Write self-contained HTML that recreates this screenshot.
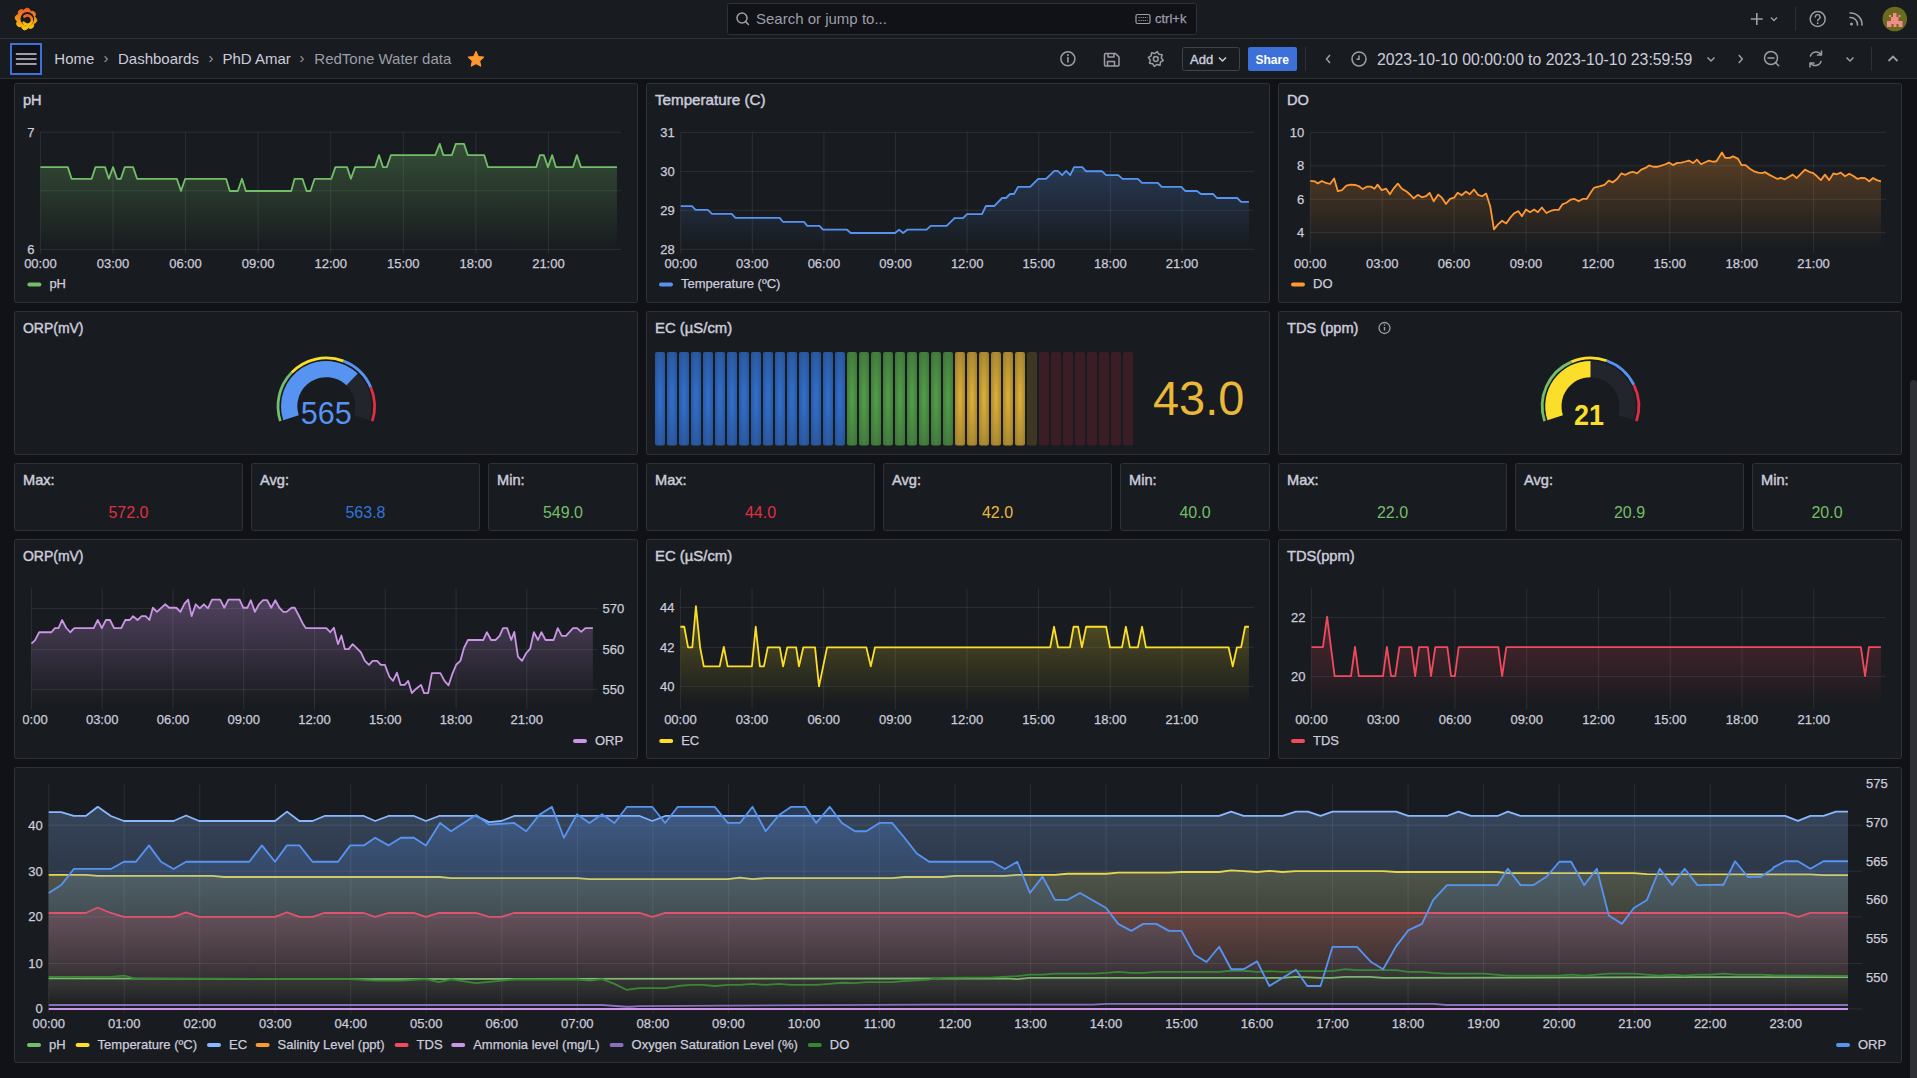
<!DOCTYPE html>
<html><head><meta charset="utf-8"><title>RedTone Water data - Dashboards - Grafana</title>
<style>html,body{margin:0;padding:0;background:#111217;width:1917px;height:1078px;overflow:hidden;font-family:"Liberation Sans",sans-serif}svg{display:block}</style>
</head><body><svg width="1917" height="1078" viewBox="0 0 1917 1078" font-family="'Liberation Sans', sans-serif"><defs><linearGradient id="lg" x1="0" y1="0" x2="0" y2="1"><stop offset="0" stop-color="#f05a28"/><stop offset="1" stop-color="#fbca0a"/></linearGradient><linearGradient id="g1" gradientUnits="userSpaceOnUse" x1="0" y1="132.2" x2="0" y2="249.4"><stop offset="0" stop-color="#73bf69" stop-opacity="0.35"/><stop offset="1" stop-color="#73bf69" stop-opacity="0"/></linearGradient><linearGradient id="g2" gradientUnits="userSpaceOnUse" x1="0" y1="132.4" x2="0" y2="249.3"><stop offset="0" stop-color="#5794f2" stop-opacity="0.35"/><stop offset="1" stop-color="#5794f2" stop-opacity="0"/></linearGradient><linearGradient id="g3" gradientUnits="userSpaceOnUse" x1="0" y1="132.4" x2="0" y2="249.4"><stop offset="0" stop-color="#ff9830" stop-opacity="0.35"/><stop offset="1" stop-color="#ff9830" stop-opacity="0"/></linearGradient><linearGradient id="g4" gradientUnits="userSpaceOnUse" x1="0" y1="588.6" x2="0" y2="705.4"><stop offset="0" stop-color="#ca95e5" stop-opacity="0.35"/><stop offset="1" stop-color="#ca95e5" stop-opacity="0"/></linearGradient><clipPath id="c5"><rect x="22.7" y="0" width="2000" height="2000"/></clipPath><linearGradient id="g6" gradientUnits="userSpaceOnUse" x1="0" y1="588.4" x2="0" y2="705"><stop offset="0" stop-color="#fade2a" stop-opacity="0.35"/><stop offset="1" stop-color="#fade2a" stop-opacity="0"/></linearGradient><linearGradient id="g7" gradientUnits="userSpaceOnUse" x1="0" y1="588.4" x2="0" y2="705"><stop offset="0" stop-color="#f2495c" stop-opacity="0.35"/><stop offset="1" stop-color="#f2495c" stop-opacity="0"/></linearGradient><linearGradient id="g8" gradientUnits="userSpaceOnUse" x1="0" y1="784.4" x2="0" y2="1009"><stop offset="0" stop-color="#73bf69" stop-opacity="0.3"/><stop offset="1" stop-color="#73bf69" stop-opacity="0"/></linearGradient><linearGradient id="g9" gradientUnits="userSpaceOnUse" x1="0" y1="784.4" x2="0" y2="1009"><stop offset="0" stop-color="#fade2a" stop-opacity="0.3"/><stop offset="1" stop-color="#fade2a" stop-opacity="0"/></linearGradient><linearGradient id="g10" gradientUnits="userSpaceOnUse" x1="0" y1="784.4" x2="0" y2="1009"><stop offset="0" stop-color="#8ab8ff" stop-opacity="0.3"/><stop offset="1" stop-color="#8ab8ff" stop-opacity="0"/></linearGradient><linearGradient id="g11" gradientUnits="userSpaceOnUse" x1="0" y1="784.4" x2="0" y2="1009"><stop offset="0" stop-color="#f2495c" stop-opacity="0.5"/><stop offset="1" stop-color="#f2495c" stop-opacity="0"/></linearGradient><linearGradient id="g12" gradientUnits="userSpaceOnUse" x1="0" y1="784.4" x2="0" y2="1009"><stop offset="0" stop-color="#ca95e5" stop-opacity="0.3"/><stop offset="1" stop-color="#ca95e5" stop-opacity="0"/></linearGradient><linearGradient id="g13" gradientUnits="userSpaceOnUse" x1="0" y1="784.4" x2="0" y2="1009"><stop offset="0" stop-color="#8a6fc0" stop-opacity="0.3"/><stop offset="1" stop-color="#8a6fc0" stop-opacity="0"/></linearGradient><linearGradient id="g14" gradientUnits="userSpaceOnUse" x1="0" y1="784.4" x2="0" y2="1009"><stop offset="0" stop-color="#37872d" stop-opacity="0.3"/><stop offset="1" stop-color="#37872d" stop-opacity="0"/></linearGradient><linearGradient id="g15" gradientUnits="userSpaceOnUse" x1="0" y1="784.4" x2="0" y2="1009"><stop offset="0" stop-color="#5794f2" stop-opacity="0.3"/><stop offset="1" stop-color="#5794f2" stop-opacity="0"/></linearGradient><radialGradient id="rgb" cx="0.5" cy="0.5" r="0.7071"><stop offset="0.1" stop-color="#3274d9" stop-opacity="0.92"/><stop offset="1" stop-color="#3274d9" stop-opacity="0.6"/></radialGradient><radialGradient id="rgg" cx="0.5" cy="0.5" r="0.7071"><stop offset="0.1" stop-color="#56a64b" stop-opacity="0.92"/><stop offset="1" stop-color="#56a64b" stop-opacity="0.6"/></radialGradient><radialGradient id="rgy" cx="0.5" cy="0.5" r="0.7071"><stop offset="0.1" stop-color="#eab839" stop-opacity="0.92"/><stop offset="1" stop-color="#eab839" stop-opacity="0.6"/></radialGradient><radialGradient id="rgr" cx="0.5" cy="0.5" r="0.7071"><stop offset="0.1" stop-color="#e02f44" stop-opacity="0.92"/><stop offset="1" stop-color="#e02f44" stop-opacity="0.6"/></radialGradient></defs><rect x="0" y="0" width="1917" height="1078" fill="#111217"/><rect x="0" y="0" width="1917" height="38" fill="#181b1f"/><rect x="0" y="38" width="1917" height="1" fill="#2e3136"/><rect x="0" y="39" width="1917" height="39" fill="#181b1f"/><rect x="0" y="78" width="1917" height="1" fill="#2e3136"/><path d="M27.64,8.12 L29.53,9.22 L30.6,11.38 L33.01,11.31 L34.85,12.47 L35.41,14.58 L34.64,16.86 L36.39,18.52 L36.88,20.64 L35.78,22.53 L33.62,23.6 L33.69,26.01 L32.53,27.85 L30.42,28.41 L28.14,27.64 L26.48,29.39 L24.36,29.88 L22.47,28.78 L21.4,26.62 L18.99,26.69 L17.15,25.53 L16.59,23.42 L17.36,21.14 L15.61,19.48 L15.12,17.36 L16.22,15.47 L18.38,14.4 L18.31,11.99 L19.47,10.15 L21.58,9.59 L23.86,10.36 L25.52,8.61 Z" fill="url(#lg)" stroke="url(#lg)" stroke-width="1" stroke-linejoin="round"/><circle cx="27.3" cy="18.8" r="6.9" fill="#181b1f"/><path d="M24.4,16.5 A4.6,4.6 0 1 1 23.6,22.6" fill="none" stroke="url(#lg)" stroke-width="2.6" stroke-linecap="round"/><circle cx="27.6" cy="20.2" r="1.7" fill="#181b1f"/><rect x="727.5" y="3.5" width="469" height="31" rx="2" fill="#111217" stroke="#2e3136"/><circle cx="742" cy="18" r="5" fill="none" stroke="#9d9da8" stroke-width="1.5"/><line x1="745.6" y1="21.6" x2="748.5" y2="24.5" stroke="#9d9da8" stroke-width="1.5" stroke-linecap="round"/><text x="756" y="24" font-size="15" fill="#9d9da8" text-anchor="start" >Search or jump to...</text><rect x="1136" y="14.5" width="14" height="9" rx="1.5" fill="none" stroke="#9d9da8" stroke-width="1.2"/><path d="M1138.5,17.5 h9 M1138.5,20.5 h9" stroke="#9d9da8" stroke-width="1" stroke-dasharray="1.2 0.9"/><text x="1155" y="22.5" font-size="13" fill="#9d9da8" text-anchor="start"  stroke="#9d9da8" stroke-width="0.25">ctrl+k</text><path d="M1756.8,13 v12 M1750.8,19 h12" stroke="#9d9da8" stroke-width="1.6"/><path d="M1771,17.5 l3,3 l3,-3" fill="none" stroke="#9d9da8" stroke-width="1.3"/><rect x="1795" y="7" width="1" height="24" fill="#2e3136"/><circle cx="1817.7" cy="19" r="7.5" fill="none" stroke="#9d9da8" stroke-width="1.5"/><path d="M1815.3,17 a2.4,2.4 0 1 1 3.2,2.3 q-0.8,0.4 -0.8,1.4" fill="none" stroke="#9d9da8" stroke-width="1.4" stroke-linecap="round"/><circle cx="1817.7" cy="23.2" r="0.9" fill="#9d9da8"/><circle cx="1851.5" cy="24" r="1.5" fill="#9d9da8"/><path d="M1850,17.5 a7,7 0 0 1 7.5,7.5 M1850,13 a11.5,11.5 0 0 1 12,12" fill="none" stroke="#9d9da8" stroke-width="1.6" stroke-linecap="round"/><circle cx="1894.8" cy="19" r="12.3" fill="#6b6b1f"/><path d="M1887,21 h15.5 v6 h-4 v-3 h-2 v3 h-3 v-3 h-2 v3 h-4.5 z M1891,17 h7.5 v4 h-7.5 z M1893,13 h3.5 v4 h-3.5 z M1889,15 h2 v2 h-2z M1898.5,15 h2 v2 h-2z" fill="#f08c8c"/><rect x="11" y="44" width="30" height="30" fill="#111217" stroke="#3d71d9" stroke-width="2"/><path d="M16.5,54 h19.5 M16.5,59 h19.5 M16.5,64 h19.5" stroke="#ccccdc" stroke-width="1.6" stroke-linecap="round"/><text x="54.3" y="64" font-size="15" fill="#ccccdc" text-anchor="start" >Home</text><text x="103.5" y="63" font-size="15" fill="#9d9da8" text-anchor="start" >›</text><text x="118" y="64" font-size="15" fill="#ccccdc" text-anchor="start" >Dashboards</text><text x="208.5" y="63" font-size="15" fill="#9d9da8" text-anchor="start" >›</text><text x="222.4" y="64" font-size="15" fill="#ccccdc" text-anchor="start" >PhD Amar</text><text x="299.5" y="63" font-size="15" fill="#9d9da8" text-anchor="start" >›</text><text x="314.3" y="64" font-size="15" fill="#9d9da8" text-anchor="start" >RedTone Water data</text><path d="M476,51.6 L478.23,56.53 L483.61,57.13 L479.61,60.77 L480.7,66.07 L476,63.4 L471.3,66.07 L472.39,60.77 L468.39,57.13 L473.77,56.53 Z" fill="#ff9830" stroke="#ff9830" stroke-width="1.2" stroke-linejoin="round"/><circle cx="1067.9" cy="58.8" r="7" fill="none" stroke="#9d9da8" stroke-width="1.5"/><path d="M1067.9,57.5 v4.5" stroke="#9d9da8" stroke-width="1.6" stroke-linecap="round"/><circle cx="1067.9" cy="55" r="1" fill="#9d9da8"/><path d="M1105.5,53.5 h10 l3.5,3.5 v8 a1,1 0 0 1 -1,1 h-12.5 a1,1 0 0 1 -1,-1 v-10.5 a1,1 0 0 1 1,-1 z M1108,53.5 v3.5 h6 v-3.5 M1107.5,66 v-4.5 h7 v4.5" fill="none" stroke="#9d9da8" stroke-width="1.5" stroke-linejoin="round"/><path d="M1163.25,60.48 L1160.46,62.11 L1160.02,65.32 L1156.89,64.49 L1154.32,66.45 L1152.69,63.66 L1149.48,63.22 L1150.31,60.09 L1148.35,57.52 L1151.14,55.89 L1151.58,52.68 L1154.71,53.51 L1157.28,51.55 L1158.91,54.34 L1162.12,54.78 L1161.29,57.91 Z" fill="none" stroke="#9d9da8" stroke-width="1.5" stroke-linejoin="round"/><circle cx="1155.8" cy="59" r="2.4" fill="none" stroke="#9d9da8" stroke-width="1.5"/><rect x="1182.5" y="47.5" width="57" height="23" rx="2" fill="none" stroke="#404349" stroke-width="1"/><text x="1190" y="63.5" font-size="13" fill="#ccccdc" text-anchor="start" stroke="#ccccdc" stroke-width="0.4">Add</text><path d="M1219,57.5 l3.5,3.5 l3.5,-3.5" fill="none" stroke="#ccccdc" stroke-width="1.5"/><rect x="1248" y="47" width="49" height="24" rx="2" fill="#3d71d9"/><text x="1255.5" y="63.5" font-size="12" fill="#ffffff" font-weight="bold" text-anchor="start" >Share</text><rect x="1305" y="47" width="1" height="24" fill="#2e3136"/><path d="M1330,55 l-3.5,4 l3.5,4" fill="none" stroke="#9d9da8" stroke-width="1.5"/><circle cx="1359" cy="59" r="7" fill="none" stroke="#9d9da8" stroke-width="1.5"/><path d="M1359,55.5 v3.8 h-2.5" fill="none" stroke="#9d9da8" stroke-width="1.5"/><text x="1377" y="64.5" font-size="15.8" fill="#ccccdc" text-anchor="start" >2023-10-10 00:00:00 to 2023-10-10 23:59:59</text><path d="M1707.5,57.5 l3.5,3.5 l3.5,-3.5" fill="none" stroke="#9d9da8" stroke-width="1.5"/><path d="M1738.8,55 l3.5,4 l-3.5,4" fill="none" stroke="#9d9da8" stroke-width="1.5"/><circle cx="1771" cy="58" r="6.5" fill="none" stroke="#9d9da8" stroke-width="1.5"/><path d="M1768,58 h6 M1775.7,62.7 l3,3" stroke="#9d9da8" stroke-width="1.5" stroke-linecap="round"/><path d="M1810.5,56 a6,6 0 0 1 10.7,-1.3 M1821,61.5 a6,6 0 0 1 -10.7,1.3 M1821.5,51 v4 h-4 M1810,67 v-4 h4" fill="none" stroke="#9d9da8" stroke-width="1.5" stroke-linecap="round" stroke-linejoin="round"/><path d="M1846.5,57.5 l3.5,3.5 l3.5,-3.5" fill="none" stroke="#9d9da8" stroke-width="1.5"/><rect x="1871" y="47" width="1" height="24" fill="#2e3136"/><path d="M1888.5,61 l4.5,-4.5 l4.5,4.5" fill="none" stroke="#9d9da8" stroke-width="1.8"/><rect x="1910" y="380" width="7" height="720" rx="3.5" fill="#2f3035"/><rect x="14.5" y="83.5" width="623" height="219" rx="2" fill="#181b1f" stroke="#2e3136" stroke-width="1"/><rect x="14.5" y="311.5" width="623" height="143" rx="2" fill="#181b1f" stroke="#2e3136" stroke-width="1"/><rect x="14.5" y="539.5" width="623" height="219" rx="2" fill="#181b1f" stroke="#2e3136" stroke-width="1"/><rect x="646.5" y="83.5" width="623" height="219" rx="2" fill="#181b1f" stroke="#2e3136" stroke-width="1"/><rect x="646.5" y="311.5" width="623" height="143" rx="2" fill="#181b1f" stroke="#2e3136" stroke-width="1"/><rect x="646.5" y="539.5" width="623" height="219" rx="2" fill="#181b1f" stroke="#2e3136" stroke-width="1"/><rect x="1278.5" y="83.5" width="623" height="219" rx="2" fill="#181b1f" stroke="#2e3136" stroke-width="1"/><rect x="1278.5" y="311.5" width="623" height="143" rx="2" fill="#181b1f" stroke="#2e3136" stroke-width="1"/><rect x="1278.5" y="539.5" width="623" height="219" rx="2" fill="#181b1f" stroke="#2e3136" stroke-width="1"/><rect x="14.5" y="463.5" width="228" height="67" rx="2" fill="#181b1f" stroke="#2e3136" stroke-width="1"/><rect x="251.5" y="463.5" width="228" height="67" rx="2" fill="#181b1f" stroke="#2e3136" stroke-width="1"/><rect x="488.5" y="463.5" width="149" height="67" rx="2" fill="#181b1f" stroke="#2e3136" stroke-width="1"/><rect x="646.5" y="463.5" width="228" height="67" rx="2" fill="#181b1f" stroke="#2e3136" stroke-width="1"/><rect x="883.5" y="463.5" width="228" height="67" rx="2" fill="#181b1f" stroke="#2e3136" stroke-width="1"/><rect x="1120.5" y="463.5" width="149" height="67" rx="2" fill="#181b1f" stroke="#2e3136" stroke-width="1"/><rect x="1278.5" y="463.5" width="228" height="67" rx="2" fill="#181b1f" stroke="#2e3136" stroke-width="1"/><rect x="1515.5" y="463.5" width="228" height="67" rx="2" fill="#181b1f" stroke="#2e3136" stroke-width="1"/><rect x="1752.5" y="463.5" width="149" height="67" rx="2" fill="#181b1f" stroke="#2e3136" stroke-width="1"/><rect x="14.5" y="767.5" width="1887" height="295" rx="2" fill="#181b1f" stroke="#2e3136" stroke-width="1"/><text x="23" y="105" font-size="14.6" fill="#ccccdc" text-anchor="start" stroke="#ccccdc" stroke-width="0.45">pH</text><text x="655" y="105" font-size="14.6" fill="#ccccdc" text-anchor="start" stroke="#ccccdc" stroke-width="0.45" textLength="110.5" lengthAdjust="spacingAndGlyphs">Temperature (C)</text><text x="1287" y="105" font-size="14.6" fill="#ccccdc" text-anchor="start" stroke="#ccccdc" stroke-width="0.45">DO</text><text x="23" y="333" font-size="14.6" fill="#ccccdc" text-anchor="start" stroke="#ccccdc" stroke-width="0.45" textLength="60.5" lengthAdjust="spacingAndGlyphs">ORP(mV)</text><text x="655" y="333" font-size="14.6" fill="#ccccdc" text-anchor="start" stroke="#ccccdc" stroke-width="0.45" textLength="77.2" lengthAdjust="spacingAndGlyphs">EC (µS/cm)</text><text x="1287" y="333" font-size="14.6" fill="#ccccdc" text-anchor="start" stroke="#ccccdc" stroke-width="0.45" textLength="71.5" lengthAdjust="spacingAndGlyphs">TDS (ppm)</text><text x="23" y="561" font-size="14.6" fill="#ccccdc" text-anchor="start" stroke="#ccccdc" stroke-width="0.45" textLength="60.5" lengthAdjust="spacingAndGlyphs">ORP(mV)</text><text x="655" y="561" font-size="14.6" fill="#ccccdc" text-anchor="start" stroke="#ccccdc" stroke-width="0.45" textLength="77.2" lengthAdjust="spacingAndGlyphs">EC (µS/cm)</text><text x="1287" y="561" font-size="14.6" fill="#ccccdc" text-anchor="start" stroke="#ccccdc" stroke-width="0.45" textLength="67.5" lengthAdjust="spacingAndGlyphs">TDS(ppm)</text><circle cx="1384.5" cy="328" r="5.5" fill="none" stroke="#9d9da8" stroke-width="1.3"/><path d="M1384.5,327 v3.5" stroke="#9d9da8" stroke-width="1.4"/><circle cx="1384.5" cy="325" r="0.8" fill="#9d9da8"/><line x1="40.4" y1="132.2" x2="621" y2="132.2" stroke="rgba(240,250,255,0.09)" stroke-width="1"/><line x1="40.4" y1="190.8" x2="621" y2="190.8" stroke="rgba(240,250,255,0.09)" stroke-width="1"/><line x1="40.4" y1="249.4" x2="621" y2="249.4" stroke="rgba(240,250,255,0.09)" stroke-width="1"/><line x1="40.4" y1="132.2" x2="40.4" y2="253.4" stroke="rgba(240,250,255,0.09)" stroke-width="1"/><line x1="112.97" y1="132.2" x2="112.97" y2="253.4" stroke="rgba(240,250,255,0.09)" stroke-width="1"/><line x1="185.55" y1="132.2" x2="185.55" y2="253.4" stroke="rgba(240,250,255,0.09)" stroke-width="1"/><line x1="258.12" y1="132.2" x2="258.12" y2="253.4" stroke="rgba(240,250,255,0.09)" stroke-width="1"/><line x1="330.7" y1="132.2" x2="330.7" y2="253.4" stroke="rgba(240,250,255,0.09)" stroke-width="1"/><line x1="403.27" y1="132.2" x2="403.27" y2="253.4" stroke="rgba(240,250,255,0.09)" stroke-width="1"/><line x1="475.85" y1="132.2" x2="475.85" y2="253.4" stroke="rgba(240,250,255,0.09)" stroke-width="1"/><line x1="548.43" y1="132.2" x2="548.43" y2="253.4" stroke="rgba(240,250,255,0.09)" stroke-width="1"/><path d="M40.39,167.1 L67.78,167.1 L71.62,178.79 L91.66,178.79 L95.5,167.1 L105.02,167.1 L108.86,178.79 L113.04,167.1 L117.05,178.79 L120.89,178.79 L124.73,167.1 L133.08,167.1 L137.09,178.79 L176.84,178.79 L181.01,190.98 L185.19,178.79 L226.11,178.79 L229.78,190.98 L237.8,190.98 L241.97,178.79 L245.82,190.98 L291.24,190.98 L294.58,178.79 L302.43,178.79 L306.61,190.98 L310.45,190.98 L314.63,178.79 L331.36,178.79 L335.37,167.1 L347.06,167.1 L350.9,178.79 L355.07,167.1 L375.11,167.1 L378.96,155.07 L382.96,167.1 L386.81,167.1 L390.98,155.07 L435.24,155.07 L439.75,143.88 L443.26,155.07 L451.94,155.07 L455.78,143.88 L463.97,143.88 L467.81,155.07 L484.18,155.07 L487.85,167.1 L536.28,167.1 L539.96,155.07 L543.8,155.07 L547.97,167.1 L552.15,155.07 L555.82,167.1 L573.03,167.1 L576.87,155.07 L580.88,167.1 L616.95,167.1 L616.95,249.4 L40.39,249.4 Z" fill="url(#g1)"/><path d="M40.39,167.1 L67.78,167.1 L71.62,178.79 L91.66,178.79 L95.5,167.1 L105.02,167.1 L108.86,178.79 L113.04,167.1 L117.05,178.79 L120.89,178.79 L124.73,167.1 L133.08,167.1 L137.09,178.79 L176.84,178.79 L181.01,190.98 L185.19,178.79 L226.11,178.79 L229.78,190.98 L237.8,190.98 L241.97,178.79 L245.82,190.98 L291.24,190.98 L294.58,178.79 L302.43,178.79 L306.61,190.98 L310.45,190.98 L314.63,178.79 L331.36,178.79 L335.37,167.1 L347.06,167.1 L350.9,178.79 L355.07,167.1 L375.11,167.1 L378.96,155.07 L382.96,167.1 L386.81,167.1 L390.98,155.07 L435.24,155.07 L439.75,143.88 L443.26,155.07 L451.94,155.07 L455.78,143.88 L463.97,143.88 L467.81,155.07 L484.18,155.07 L487.85,167.1 L536.28,167.1 L539.96,155.07 L543.8,155.07 L547.97,167.1 L552.15,155.07 L555.82,167.1 L573.03,167.1 L576.87,155.07 L580.88,167.1 L616.95,167.1" fill="none" stroke="#73bf69" stroke-width="1.8" stroke-linejoin="round"/><text x="34.4" y="136.5" font-size="13" fill="#ccccdc" text-anchor="end"  stroke="#ccccdc" stroke-width="0.25">7</text><text x="34.4" y="195.1" font-size="13" fill="#ccccdc" text-anchor="end"  stroke="#ccccdc" stroke-width="0.25"></text><text x="34.4" y="253.7" font-size="13" fill="#ccccdc" text-anchor="end"  stroke="#ccccdc" stroke-width="0.25">6</text><text x="40.4" y="267.8" font-size="13" fill="#ccccdc" text-anchor="middle"  stroke="#ccccdc" stroke-width="0.25">00:00</text><text x="112.97" y="267.8" font-size="13" fill="#ccccdc" text-anchor="middle"  stroke="#ccccdc" stroke-width="0.25">03:00</text><text x="185.55" y="267.8" font-size="13" fill="#ccccdc" text-anchor="middle"  stroke="#ccccdc" stroke-width="0.25">06:00</text><text x="258.12" y="267.8" font-size="13" fill="#ccccdc" text-anchor="middle"  stroke="#ccccdc" stroke-width="0.25">09:00</text><text x="330.7" y="267.8" font-size="13" fill="#ccccdc" text-anchor="middle"  stroke="#ccccdc" stroke-width="0.25">12:00</text><text x="403.27" y="267.8" font-size="13" fill="#ccccdc" text-anchor="middle"  stroke="#ccccdc" stroke-width="0.25">15:00</text><text x="475.85" y="267.8" font-size="13" fill="#ccccdc" text-anchor="middle"  stroke="#ccccdc" stroke-width="0.25">18:00</text><text x="548.43" y="267.8" font-size="13" fill="#ccccdc" text-anchor="middle"  stroke="#ccccdc" stroke-width="0.25">21:00</text><rect x="27.4" y="282.5" width="14" height="4" rx="2" fill="#73bf69"/><text x="49.4" y="288.1" font-size="13" fill="#ccccdc" text-anchor="start"  stroke="#ccccdc" stroke-width="0.25">pH</text><line x1="680.7" y1="132.4" x2="1253.6" y2="132.4" stroke="rgba(240,250,255,0.09)" stroke-width="1"/><line x1="680.7" y1="171.4" x2="1253.6" y2="171.4" stroke="rgba(240,250,255,0.09)" stroke-width="1"/><line x1="680.7" y1="210.3" x2="1253.6" y2="210.3" stroke="rgba(240,250,255,0.09)" stroke-width="1"/><line x1="680.7" y1="249.3" x2="1253.6" y2="249.3" stroke="rgba(240,250,255,0.09)" stroke-width="1"/><line x1="680.7" y1="132.4" x2="680.7" y2="253.3" stroke="rgba(240,250,255,0.09)" stroke-width="1"/><line x1="752.31" y1="132.4" x2="752.31" y2="253.3" stroke="rgba(240,250,255,0.09)" stroke-width="1"/><line x1="823.92" y1="132.4" x2="823.92" y2="253.3" stroke="rgba(240,250,255,0.09)" stroke-width="1"/><line x1="895.54" y1="132.4" x2="895.54" y2="253.3" stroke="rgba(240,250,255,0.09)" stroke-width="1"/><line x1="967.15" y1="132.4" x2="967.15" y2="253.3" stroke="rgba(240,250,255,0.09)" stroke-width="1"/><line x1="1038.76" y1="132.4" x2="1038.76" y2="253.3" stroke="rgba(240,250,255,0.09)" stroke-width="1"/><line x1="1110.38" y1="132.4" x2="1110.38" y2="253.3" stroke="rgba(240,250,255,0.09)" stroke-width="1"/><line x1="1181.99" y1="132.4" x2="1181.99" y2="253.3" stroke="rgba(240,250,255,0.09)" stroke-width="1"/><path d="M680.71,206.04 L691.94,206.04 L695.61,209.92 L707.86,209.92 L711.94,213.8 L731.73,213.8 L735.41,217.88 L779.69,217.88 L783.16,221.96 L804.18,221.96 L807.24,225.84 L819.49,225.84 L822.96,229.71 L847.04,229.71 L850.71,232.98 L895,232.98 L899.08,229.71 L903.16,232.98 L907.24,229.71 L926.63,229.71 L930.71,225.84 L946.63,225.84 L954.8,217.88 L955,218.04 L963.02,218.04 L963.37,217.88 L967.03,214.03 L982.06,214.03 L985.9,206.01 L994.25,206.01 L1002.1,198 L1005.94,198 L1010.11,193.99 L1013.96,193.99 L1018.13,186.81 L1030.16,186.81 L1038.17,178.79 L1046.02,178.79 L1054.37,170.94 L1057.71,170.94 L1062.22,175.11 L1066.06,170.94 L1070.24,175.11 L1074.08,167.1 L1082.27,167.1 L1086.11,171.27 L1101.97,171.27 L1106.15,175.11 L1118.34,175.11 L1122.52,178.96 L1137.88,178.96 L1142.06,182.96 L1157.92,182.96 L1161.6,186.81 L1181.3,186.81 L1185.15,190.98 L1196.84,190.98 L1201.01,193.99 L1213.04,193.99 L1216.88,198 L1237.25,198 L1241.1,201.84 L1248.95,201.84 L1248.95,249.3 L680.71,249.3 Z" fill="url(#g2)"/><path d="M680.71,206.04 L691.94,206.04 L695.61,209.92 L707.86,209.92 L711.94,213.8 L731.73,213.8 L735.41,217.88 L779.69,217.88 L783.16,221.96 L804.18,221.96 L807.24,225.84 L819.49,225.84 L822.96,229.71 L847.04,229.71 L850.71,232.98 L895,232.98 L899.08,229.71 L903.16,232.98 L907.24,229.71 L926.63,229.71 L930.71,225.84 L946.63,225.84 L954.8,217.88 L955,218.04 L963.02,218.04 L963.37,217.88 L967.03,214.03 L982.06,214.03 L985.9,206.01 L994.25,206.01 L1002.1,198 L1005.94,198 L1010.11,193.99 L1013.96,193.99 L1018.13,186.81 L1030.16,186.81 L1038.17,178.79 L1046.02,178.79 L1054.37,170.94 L1057.71,170.94 L1062.22,175.11 L1066.06,170.94 L1070.24,175.11 L1074.08,167.1 L1082.27,167.1 L1086.11,171.27 L1101.97,171.27 L1106.15,175.11 L1118.34,175.11 L1122.52,178.96 L1137.88,178.96 L1142.06,182.96 L1157.92,182.96 L1161.6,186.81 L1181.3,186.81 L1185.15,190.98 L1196.84,190.98 L1201.01,193.99 L1213.04,193.99 L1216.88,198 L1237.25,198 L1241.1,201.84 L1248.95,201.84" fill="none" stroke="#5794f2" stroke-width="1.8" stroke-linejoin="round"/><text x="674.7" y="136.7" font-size="13" fill="#ccccdc" text-anchor="end"  stroke="#ccccdc" stroke-width="0.25">31</text><text x="674.7" y="175.7" font-size="13" fill="#ccccdc" text-anchor="end"  stroke="#ccccdc" stroke-width="0.25">30</text><text x="674.7" y="214.6" font-size="13" fill="#ccccdc" text-anchor="end"  stroke="#ccccdc" stroke-width="0.25">29</text><text x="674.7" y="253.6" font-size="13" fill="#ccccdc" text-anchor="end"  stroke="#ccccdc" stroke-width="0.25">28</text><text x="680.7" y="267.7" font-size="13" fill="#ccccdc" text-anchor="middle"  stroke="#ccccdc" stroke-width="0.25">00:00</text><text x="752.31" y="267.7" font-size="13" fill="#ccccdc" text-anchor="middle"  stroke="#ccccdc" stroke-width="0.25">03:00</text><text x="823.92" y="267.7" font-size="13" fill="#ccccdc" text-anchor="middle"  stroke="#ccccdc" stroke-width="0.25">06:00</text><text x="895.54" y="267.7" font-size="13" fill="#ccccdc" text-anchor="middle"  stroke="#ccccdc" stroke-width="0.25">09:00</text><text x="967.15" y="267.7" font-size="13" fill="#ccccdc" text-anchor="middle"  stroke="#ccccdc" stroke-width="0.25">12:00</text><text x="1038.76" y="267.7" font-size="13" fill="#ccccdc" text-anchor="middle"  stroke="#ccccdc" stroke-width="0.25">15:00</text><text x="1110.38" y="267.7" font-size="13" fill="#ccccdc" text-anchor="middle"  stroke="#ccccdc" stroke-width="0.25">18:00</text><text x="1181.99" y="267.7" font-size="13" fill="#ccccdc" text-anchor="middle"  stroke="#ccccdc" stroke-width="0.25">21:00</text><rect x="659" y="282.5" width="14" height="4" rx="2" fill="#5794f2"/><text x="681" y="288.1" font-size="13" fill="#ccccdc" text-anchor="start"  stroke="#ccccdc" stroke-width="0.25">Temperature (ºC)</text><line x1="1310.3" y1="132.4" x2="1885.5" y2="132.4" stroke="rgba(240,250,255,0.09)" stroke-width="1"/><line x1="1310.3" y1="165.8" x2="1885.5" y2="165.8" stroke="rgba(240,250,255,0.09)" stroke-width="1"/><line x1="1310.3" y1="199.3" x2="1885.5" y2="199.3" stroke="rgba(240,250,255,0.09)" stroke-width="1"/><line x1="1310.3" y1="232.6" x2="1885.5" y2="232.6" stroke="rgba(240,250,255,0.09)" stroke-width="1"/><line x1="1310.3" y1="132.4" x2="1310.3" y2="253.4" stroke="rgba(240,250,255,0.09)" stroke-width="1"/><line x1="1382.2" y1="132.4" x2="1382.2" y2="253.4" stroke="rgba(240,250,255,0.09)" stroke-width="1"/><line x1="1454.1" y1="132.4" x2="1454.1" y2="253.4" stroke="rgba(240,250,255,0.09)" stroke-width="1"/><line x1="1526" y1="132.4" x2="1526" y2="253.4" stroke="rgba(240,250,255,0.09)" stroke-width="1"/><line x1="1597.9" y1="132.4" x2="1597.9" y2="253.4" stroke="rgba(240,250,255,0.09)" stroke-width="1"/><line x1="1669.8" y1="132.4" x2="1669.8" y2="253.4" stroke="rgba(240,250,255,0.09)" stroke-width="1"/><line x1="1741.7" y1="132.4" x2="1741.7" y2="253.4" stroke="rgba(240,250,255,0.09)" stroke-width="1"/><line x1="1813.6" y1="132.4" x2="1813.6" y2="253.4" stroke="rgba(240,250,255,0.09)" stroke-width="1"/><path d="M1310.27,180.94 L1314.76,181.35 L1317.82,183.39 L1321.9,180.94 L1325.98,182.98 L1330.06,184 L1334.14,178.49 L1337.82,191.14 L1341.9,190.12 L1346.39,185.63 L1350.47,184.61 L1355.57,185.02 L1358.63,186.04 L1362.71,189.1 L1366.8,186.65 L1370.88,186.65 L1374.55,188.69 L1377.61,184.61 L1381.69,190.12 L1386.18,188.69 L1389.86,194.2 L1393.94,188.08 L1397.82,183.59 L1401.9,188.69 L1406.59,191.55 L1409.65,194.2 L1413.73,198.29 L1417.82,194.82 L1421.9,197.27 L1425.98,196.24 L1429.65,192.78 L1433.73,201.35 L1438.22,194.61 L1441.9,197.67 L1445.98,204 L1450.06,198.9 L1454.14,197.67 L1457.61,192.78 L1461.69,195.22 L1465.78,191.55 L1469.86,194.2 L1473.94,189.51 L1478.02,194.82 L1482.1,196.24 L1486.18,193.59 L1490.27,206.45 L1493.94,229.31 L1498.02,224.41 L1502.1,220.73 L1506.18,223.39 L1510.27,217.67 L1514.35,213.18 L1518.43,211.14 L1521.9,216.24 L1525.98,209.51 L1530.06,212.16 L1534.14,209.51 L1537.82,212.16 L1541.9,207.47 L1546.39,212.98 L1550.47,210.94 L1554.55,209.92 L1558.63,209.92 L1562.31,204.41 L1566.39,202.78 L1570.47,199.71 L1574.55,198.9 L1578.63,201.35 L1582.71,198.9 L1586.8,198.9 L1587,198.5 L1590.88,192.16 L1593.68,188.14 L1594.35,187.67 L1599.53,186.47 L1604.54,184.8 L1608.71,180.63 L1612.89,182.3 L1617.06,178.96 L1621.24,173.44 L1625.41,174.78 L1629.59,172.61 L1632.93,171.77 L1637.1,173.44 L1641.28,169.6 L1645.46,167.93 L1649.13,165.43 L1652.97,166.76 L1657.15,166.76 L1661.32,165.59 L1665.5,164.26 L1668.84,162.59 L1673.01,165.09 L1677.19,162.92 L1681.36,162.59 L1684.7,161.75 L1688.88,160.58 L1693.05,163.09 L1696.9,159.58 L1701.07,164.26 L1705.25,162.25 L1708.92,160.58 L1713.1,161.75 L1716.44,161.25 L1721.95,152.57 L1725.29,157.91 L1729.8,157.91 L1733.14,156.41 L1738.15,158.91 L1741.49,165.09 L1745.66,165.09 L1749.84,168.77 L1754.01,171.27 L1758.19,172.61 L1762.37,173.11 L1764.87,172.11 L1769.88,175.11 L1773.22,176.78 L1777.4,178.96 L1780.74,177.95 L1784.91,179.29 L1789.09,176.78 L1792.76,174.61 L1796.6,178.12 L1800.78,173.95 L1804.95,169.6 L1809.13,171.77 L1813.3,173.11 L1817.48,176.78 L1820.82,180.13 L1825,174.61 L1829.17,180.13 L1833.35,173.44 L1836.69,174.28 L1840.86,172.61 L1845.04,176.28 L1849.21,173.78 L1853.39,175.95 L1857.56,178.96 L1861.74,177.95 L1865.08,178.12 L1869.25,181.29 L1873.1,177.95 L1876.77,180.13 L1880.95,181.29 L1880.95,249.4 L1310.27,249.4 Z" fill="url(#g3)"/><path d="M1310.27,180.94 L1314.76,181.35 L1317.82,183.39 L1321.9,180.94 L1325.98,182.98 L1330.06,184 L1334.14,178.49 L1337.82,191.14 L1341.9,190.12 L1346.39,185.63 L1350.47,184.61 L1355.57,185.02 L1358.63,186.04 L1362.71,189.1 L1366.8,186.65 L1370.88,186.65 L1374.55,188.69 L1377.61,184.61 L1381.69,190.12 L1386.18,188.69 L1389.86,194.2 L1393.94,188.08 L1397.82,183.59 L1401.9,188.69 L1406.59,191.55 L1409.65,194.2 L1413.73,198.29 L1417.82,194.82 L1421.9,197.27 L1425.98,196.24 L1429.65,192.78 L1433.73,201.35 L1438.22,194.61 L1441.9,197.67 L1445.98,204 L1450.06,198.9 L1454.14,197.67 L1457.61,192.78 L1461.69,195.22 L1465.78,191.55 L1469.86,194.2 L1473.94,189.51 L1478.02,194.82 L1482.1,196.24 L1486.18,193.59 L1490.27,206.45 L1493.94,229.31 L1498.02,224.41 L1502.1,220.73 L1506.18,223.39 L1510.27,217.67 L1514.35,213.18 L1518.43,211.14 L1521.9,216.24 L1525.98,209.51 L1530.06,212.16 L1534.14,209.51 L1537.82,212.16 L1541.9,207.47 L1546.39,212.98 L1550.47,210.94 L1554.55,209.92 L1558.63,209.92 L1562.31,204.41 L1566.39,202.78 L1570.47,199.71 L1574.55,198.9 L1578.63,201.35 L1582.71,198.9 L1586.8,198.9 L1587,198.5 L1590.88,192.16 L1593.68,188.14 L1594.35,187.67 L1599.53,186.47 L1604.54,184.8 L1608.71,180.63 L1612.89,182.3 L1617.06,178.96 L1621.24,173.44 L1625.41,174.78 L1629.59,172.61 L1632.93,171.77 L1637.1,173.44 L1641.28,169.6 L1645.46,167.93 L1649.13,165.43 L1652.97,166.76 L1657.15,166.76 L1661.32,165.59 L1665.5,164.26 L1668.84,162.59 L1673.01,165.09 L1677.19,162.92 L1681.36,162.59 L1684.7,161.75 L1688.88,160.58 L1693.05,163.09 L1696.9,159.58 L1701.07,164.26 L1705.25,162.25 L1708.92,160.58 L1713.1,161.75 L1716.44,161.25 L1721.95,152.57 L1725.29,157.91 L1729.8,157.91 L1733.14,156.41 L1738.15,158.91 L1741.49,165.09 L1745.66,165.09 L1749.84,168.77 L1754.01,171.27 L1758.19,172.61 L1762.37,173.11 L1764.87,172.11 L1769.88,175.11 L1773.22,176.78 L1777.4,178.96 L1780.74,177.95 L1784.91,179.29 L1789.09,176.78 L1792.76,174.61 L1796.6,178.12 L1800.78,173.95 L1804.95,169.6 L1809.13,171.77 L1813.3,173.11 L1817.48,176.78 L1820.82,180.13 L1825,174.61 L1829.17,180.13 L1833.35,173.44 L1836.69,174.28 L1840.86,172.61 L1845.04,176.28 L1849.21,173.78 L1853.39,175.95 L1857.56,178.96 L1861.74,177.95 L1865.08,178.12 L1869.25,181.29 L1873.1,177.95 L1876.77,180.13 L1880.95,181.29" fill="none" stroke="#ff9830" stroke-width="1.8" stroke-linejoin="round"/><text x="1304.3" y="136.7" font-size="13" fill="#ccccdc" text-anchor="end"  stroke="#ccccdc" stroke-width="0.25">10</text><text x="1304.3" y="170.1" font-size="13" fill="#ccccdc" text-anchor="end"  stroke="#ccccdc" stroke-width="0.25">8</text><text x="1304.3" y="203.6" font-size="13" fill="#ccccdc" text-anchor="end"  stroke="#ccccdc" stroke-width="0.25">6</text><text x="1304.3" y="236.9" font-size="13" fill="#ccccdc" text-anchor="end"  stroke="#ccccdc" stroke-width="0.25">4</text><text x="1310.3" y="267.7" font-size="13" fill="#ccccdc" text-anchor="middle"  stroke="#ccccdc" stroke-width="0.25">00:00</text><text x="1382.2" y="267.7" font-size="13" fill="#ccccdc" text-anchor="middle"  stroke="#ccccdc" stroke-width="0.25">03:00</text><text x="1454.1" y="267.7" font-size="13" fill="#ccccdc" text-anchor="middle"  stroke="#ccccdc" stroke-width="0.25">06:00</text><text x="1526" y="267.7" font-size="13" fill="#ccccdc" text-anchor="middle"  stroke="#ccccdc" stroke-width="0.25">09:00</text><text x="1597.9" y="267.7" font-size="13" fill="#ccccdc" text-anchor="middle"  stroke="#ccccdc" stroke-width="0.25">12:00</text><text x="1669.8" y="267.7" font-size="13" fill="#ccccdc" text-anchor="middle"  stroke="#ccccdc" stroke-width="0.25">15:00</text><text x="1741.7" y="267.7" font-size="13" fill="#ccccdc" text-anchor="middle"  stroke="#ccccdc" stroke-width="0.25">18:00</text><text x="1813.6" y="267.7" font-size="13" fill="#ccccdc" text-anchor="middle"  stroke="#ccccdc" stroke-width="0.25">21:00</text><rect x="1291" y="282.5" width="14" height="4" rx="2" fill="#ff9830"/><text x="1313" y="288.1" font-size="13" fill="#ccccdc" text-anchor="start"  stroke="#ccccdc" stroke-width="0.25">DO</text><line x1="31.4" y1="608.4" x2="597.6" y2="608.4" stroke="rgba(240,250,255,0.09)" stroke-width="1"/><line x1="31.4" y1="649.6" x2="597.6" y2="649.6" stroke="rgba(240,250,255,0.09)" stroke-width="1"/><line x1="31.4" y1="689.4" x2="597.6" y2="689.4" stroke="rgba(240,250,255,0.09)" stroke-width="1"/><line x1="31.4" y1="588.6" x2="31.4" y2="709.4" stroke="rgba(240,250,255,0.09)" stroke-width="1"/><line x1="102.18" y1="588.6" x2="102.18" y2="709.4" stroke="rgba(240,250,255,0.09)" stroke-width="1"/><line x1="172.95" y1="588.6" x2="172.95" y2="709.4" stroke="rgba(240,250,255,0.09)" stroke-width="1"/><line x1="243.73" y1="588.6" x2="243.73" y2="709.4" stroke="rgba(240,250,255,0.09)" stroke-width="1"/><line x1="314.5" y1="588.6" x2="314.5" y2="709.4" stroke="rgba(240,250,255,0.09)" stroke-width="1"/><line x1="385.27" y1="588.6" x2="385.27" y2="709.4" stroke="rgba(240,250,255,0.09)" stroke-width="1"/><line x1="456.05" y1="588.6" x2="456.05" y2="709.4" stroke="rgba(240,250,255,0.09)" stroke-width="1"/><line x1="526.83" y1="588.6" x2="526.83" y2="709.4" stroke="rgba(240,250,255,0.09)" stroke-width="1"/><path d="M31.43,643.67 L34.9,640.41 L39.18,632.24 L51.43,632.24 L54.9,628.16 L58.57,628.16 L62.04,620 L66.12,627.76 L70.2,632.24 L74.29,628.16 L93.67,628.16 L97.76,620 L101.84,628.16 L105.92,620 L110,620 L114.08,628.16 L121.22,628.16 L125.31,620 L129.8,620 L133.06,616.12 L137.55,620 L141.63,616.12 L145.71,616.12 L149.39,620 L152.86,607.76 L156.94,611.84 L165.1,604.29 L169.18,607.76 L176.33,607.76 L180.41,611.84 L184.49,603.67 L188.16,599.59 L191.63,616.12 L195.71,604.29 L199.8,608.37 L203.88,604.29 L207.96,608.37 L212.04,599.59 L220.2,599.59 L224.29,607.76 L228.37,599.59 L239.59,599.59 L243.27,607.76 L247.35,607.76 L250.82,600.2 L254.9,611.84 L258.98,604.29 L263.06,600.2 L267.14,600.2 L271.22,607.76 L275.31,600.2 L279.39,607.76 L283.47,611.84 L286.53,611.84 L291.63,607.76 L294.69,607.76 L298.78,615.51 L302.86,623.67 L305.92,628.16 L326.12,628.16 L326.33,628.16 L330.2,632.24 L333.88,627.76 L337.96,644.08 L341.43,635.51 L344.9,649.18 L348.57,649.18 L352.65,644.08 L356.73,648.16 L360.82,652.24 L364.9,660.82 L368.98,664.9 L372.65,660.82 L377.14,660.82 L380.82,664.9 L384.9,664.9 L389.39,676.73 L393.06,680.82 L396.94,672.65 L400.61,684.9 L404.69,684.9 L408.16,680.82 L411.84,693.06 L415.92,688.98 L421.02,684.9 L424.08,693.06 L428.16,693.06 L431.84,673.06 L440.41,673.06 L444.49,680.82 L448.57,685.31 L452.65,673.06 L456.33,664.49 L460.41,660.82 L463.88,648.16 L467.96,640 L483.27,640 L486.94,632.24 L491.02,640 L495.51,640 L499.59,635.92 L503.06,628.16 L507.14,628.16 L511.22,640 L514.29,631.84 L517.96,656.73 L522.04,660.82 L526.12,653.27 L530.2,648.57 L533.88,632.24 L537.96,640 L541.43,632.24 L545.51,640 L553.67,640 L557.76,628.16 L561.84,635.92 L565.92,635.92 L573.06,628.16 L577.14,628.16 L581.22,631.84 L585.31,628.16 L592.86,628.16 L592.86,705.4 L31.43,705.4 Z" fill="url(#g4)"/><path d="M31.43,643.67 L34.9,640.41 L39.18,632.24 L51.43,632.24 L54.9,628.16 L58.57,628.16 L62.04,620 L66.12,627.76 L70.2,632.24 L74.29,628.16 L93.67,628.16 L97.76,620 L101.84,628.16 L105.92,620 L110,620 L114.08,628.16 L121.22,628.16 L125.31,620 L129.8,620 L133.06,616.12 L137.55,620 L141.63,616.12 L145.71,616.12 L149.39,620 L152.86,607.76 L156.94,611.84 L165.1,604.29 L169.18,607.76 L176.33,607.76 L180.41,611.84 L184.49,603.67 L188.16,599.59 L191.63,616.12 L195.71,604.29 L199.8,608.37 L203.88,604.29 L207.96,608.37 L212.04,599.59 L220.2,599.59 L224.29,607.76 L228.37,599.59 L239.59,599.59 L243.27,607.76 L247.35,607.76 L250.82,600.2 L254.9,611.84 L258.98,604.29 L263.06,600.2 L267.14,600.2 L271.22,607.76 L275.31,600.2 L279.39,607.76 L283.47,611.84 L286.53,611.84 L291.63,607.76 L294.69,607.76 L298.78,615.51 L302.86,623.67 L305.92,628.16 L326.12,628.16 L326.33,628.16 L330.2,632.24 L333.88,627.76 L337.96,644.08 L341.43,635.51 L344.9,649.18 L348.57,649.18 L352.65,644.08 L356.73,648.16 L360.82,652.24 L364.9,660.82 L368.98,664.9 L372.65,660.82 L377.14,660.82 L380.82,664.9 L384.9,664.9 L389.39,676.73 L393.06,680.82 L396.94,672.65 L400.61,684.9 L404.69,684.9 L408.16,680.82 L411.84,693.06 L415.92,688.98 L421.02,684.9 L424.08,693.06 L428.16,693.06 L431.84,673.06 L440.41,673.06 L444.49,680.82 L448.57,685.31 L452.65,673.06 L456.33,664.49 L460.41,660.82 L463.88,648.16 L467.96,640 L483.27,640 L486.94,632.24 L491.02,640 L495.51,640 L499.59,635.92 L503.06,628.16 L507.14,628.16 L511.22,640 L514.29,631.84 L517.96,656.73 L522.04,660.82 L526.12,653.27 L530.2,648.57 L533.88,632.24 L537.96,640 L541.43,632.24 L545.51,640 L553.67,640 L557.76,628.16 L561.84,635.92 L565.92,635.92 L573.06,628.16 L577.14,628.16 L581.22,631.84 L585.31,628.16 L592.86,628.16" fill="none" stroke="#ca95e5" stroke-width="1.8" stroke-linejoin="round"/><text x="602.6" y="612.7" font-size="13" fill="#ccccdc" text-anchor="start"  stroke="#ccccdc" stroke-width="0.25">570</text><text x="602.6" y="653.9" font-size="13" fill="#ccccdc" text-anchor="start"  stroke="#ccccdc" stroke-width="0.25">560</text><text x="602.6" y="693.7" font-size="13" fill="#ccccdc" text-anchor="start"  stroke="#ccccdc" stroke-width="0.25">550</text><text x="31.4" y="723.7" font-size="13" fill="#ccccdc" text-anchor="middle" clip-path="url(#c5)" stroke="#ccccdc" stroke-width="0.25">00:00</text><text x="102.18" y="723.7" font-size="13" fill="#ccccdc" text-anchor="middle" clip-path="url(#c5)" stroke="#ccccdc" stroke-width="0.25">03:00</text><text x="172.95" y="723.7" font-size="13" fill="#ccccdc" text-anchor="middle" clip-path="url(#c5)" stroke="#ccccdc" stroke-width="0.25">06:00</text><text x="243.73" y="723.7" font-size="13" fill="#ccccdc" text-anchor="middle" clip-path="url(#c5)" stroke="#ccccdc" stroke-width="0.25">09:00</text><text x="314.5" y="723.7" font-size="13" fill="#ccccdc" text-anchor="middle" clip-path="url(#c5)" stroke="#ccccdc" stroke-width="0.25">12:00</text><text x="385.27" y="723.7" font-size="13" fill="#ccccdc" text-anchor="middle" clip-path="url(#c5)" stroke="#ccccdc" stroke-width="0.25">15:00</text><text x="456.05" y="723.7" font-size="13" fill="#ccccdc" text-anchor="middle" clip-path="url(#c5)" stroke="#ccccdc" stroke-width="0.25">18:00</text><text x="526.83" y="723.7" font-size="13" fill="#ccccdc" text-anchor="middle" clip-path="url(#c5)" stroke="#ccccdc" stroke-width="0.25">21:00</text><rect x="573" y="739" width="14" height="4" rx="2" fill="#ca95e5"/><text x="595" y="744.6" font-size="13" fill="#ccccdc" text-anchor="start"  stroke="#ccccdc" stroke-width="0.25">ORP</text><line x1="680.4" y1="607.6" x2="1253.5" y2="607.6" stroke="rgba(240,250,255,0.09)" stroke-width="1"/><line x1="680.4" y1="647.3" x2="1253.5" y2="647.3" stroke="rgba(240,250,255,0.09)" stroke-width="1"/><line x1="680.4" y1="686.4" x2="1253.5" y2="686.4" stroke="rgba(240,250,255,0.09)" stroke-width="1"/><line x1="680.4" y1="588.4" x2="680.4" y2="709" stroke="rgba(240,250,255,0.09)" stroke-width="1"/><line x1="752.04" y1="588.4" x2="752.04" y2="709" stroke="rgba(240,250,255,0.09)" stroke-width="1"/><line x1="823.67" y1="588.4" x2="823.67" y2="709" stroke="rgba(240,250,255,0.09)" stroke-width="1"/><line x1="895.31" y1="588.4" x2="895.31" y2="709" stroke="rgba(240,250,255,0.09)" stroke-width="1"/><line x1="966.95" y1="588.4" x2="966.95" y2="709" stroke="rgba(240,250,255,0.09)" stroke-width="1"/><line x1="1038.59" y1="588.4" x2="1038.59" y2="709" stroke="rgba(240,250,255,0.09)" stroke-width="1"/><line x1="1110.22" y1="588.4" x2="1110.22" y2="709" stroke="rgba(240,250,255,0.09)" stroke-width="1"/><line x1="1181.86" y1="588.4" x2="1181.86" y2="709" stroke="rgba(240,250,255,0.09)" stroke-width="1"/><path d="M680.41,626.76 L684.25,626.76 L688.09,647.31 L692.27,647.31 L695.94,606.22 L700.11,647.31 L703.79,666.35 L719.66,666.35 L723.83,646.81 L727.67,666.35 L751.89,666.35 L755.73,626.76 L759.91,666.35 L763.91,666.35 L767.76,647.31 L779.78,647.31 L783.12,666.35 L787.3,647.31 L796.15,647.31 L798.99,666.35 L803.33,647.31 L815.02,647.31 L819.03,686.39 L827.05,647.31 L866.29,647.31 L870.8,666.35 L874.98,647.31 L1050.2,647.31 L1054.04,626.76 L1058.05,647.31 L1069.91,647.31 L1073.58,626.76 L1078.09,626.76 L1081.93,647.31 L1086.11,626.76 L1106.15,626.76 L1109.99,647.31 L1122.01,647.31 L1125.86,626.76 L1129.86,647.31 L1137.88,647.31 L1142.06,626.76 L1145.9,647.31 L1228.57,647.31 L1232.75,666.35 L1236.92,647.31 L1241.1,647.31 L1245.1,626.76 L1248.95,626.76 L1248.95,705 L680.41,705 Z" fill="url(#g6)"/><path d="M680.41,626.76 L684.25,626.76 L688.09,647.31 L692.27,647.31 L695.94,606.22 L700.11,647.31 L703.79,666.35 L719.66,666.35 L723.83,646.81 L727.67,666.35 L751.89,666.35 L755.73,626.76 L759.91,666.35 L763.91,666.35 L767.76,647.31 L779.78,647.31 L783.12,666.35 L787.3,647.31 L796.15,647.31 L798.99,666.35 L803.33,647.31 L815.02,647.31 L819.03,686.39 L827.05,647.31 L866.29,647.31 L870.8,666.35 L874.98,647.31 L1050.2,647.31 L1054.04,626.76 L1058.05,647.31 L1069.91,647.31 L1073.58,626.76 L1078.09,626.76 L1081.93,647.31 L1086.11,626.76 L1106.15,626.76 L1109.99,647.31 L1122.01,647.31 L1125.86,626.76 L1129.86,647.31 L1137.88,647.31 L1142.06,626.76 L1145.9,647.31 L1228.57,647.31 L1232.75,666.35 L1236.92,647.31 L1241.1,647.31 L1245.1,626.76 L1248.95,626.76" fill="none" stroke="#fade2a" stroke-width="1.8" stroke-linejoin="round"/><text x="674.4" y="611.9" font-size="13" fill="#ccccdc" text-anchor="end"  stroke="#ccccdc" stroke-width="0.25">44</text><text x="674.4" y="651.6" font-size="13" fill="#ccccdc" text-anchor="end"  stroke="#ccccdc" stroke-width="0.25">42</text><text x="674.4" y="690.7" font-size="13" fill="#ccccdc" text-anchor="end"  stroke="#ccccdc" stroke-width="0.25">40</text><text x="680.4" y="723.6" font-size="13" fill="#ccccdc" text-anchor="middle"  stroke="#ccccdc" stroke-width="0.25">00:00</text><text x="752.04" y="723.6" font-size="13" fill="#ccccdc" text-anchor="middle"  stroke="#ccccdc" stroke-width="0.25">03:00</text><text x="823.67" y="723.6" font-size="13" fill="#ccccdc" text-anchor="middle"  stroke="#ccccdc" stroke-width="0.25">06:00</text><text x="895.31" y="723.6" font-size="13" fill="#ccccdc" text-anchor="middle"  stroke="#ccccdc" stroke-width="0.25">09:00</text><text x="966.95" y="723.6" font-size="13" fill="#ccccdc" text-anchor="middle"  stroke="#ccccdc" stroke-width="0.25">12:00</text><text x="1038.59" y="723.6" font-size="13" fill="#ccccdc" text-anchor="middle"  stroke="#ccccdc" stroke-width="0.25">15:00</text><text x="1110.22" y="723.6" font-size="13" fill="#ccccdc" text-anchor="middle"  stroke="#ccccdc" stroke-width="0.25">18:00</text><text x="1181.86" y="723.6" font-size="13" fill="#ccccdc" text-anchor="middle"  stroke="#ccccdc" stroke-width="0.25">21:00</text><rect x="659.2" y="739" width="14" height="4" rx="2" fill="#fade2a"/><text x="681.2" y="744.6" font-size="13" fill="#ccccdc" text-anchor="start"  stroke="#ccccdc" stroke-width="0.25">EC</text><line x1="1311.4" y1="617.6" x2="1885.5" y2="617.6" stroke="rgba(240,250,255,0.09)" stroke-width="1"/><line x1="1311.4" y1="676.4" x2="1885.5" y2="676.4" stroke="rgba(240,250,255,0.09)" stroke-width="1"/><line x1="1311.4" y1="588.4" x2="1311.4" y2="709" stroke="rgba(240,250,255,0.09)" stroke-width="1"/><line x1="1383.16" y1="588.4" x2="1383.16" y2="709" stroke="rgba(240,250,255,0.09)" stroke-width="1"/><line x1="1454.93" y1="588.4" x2="1454.93" y2="709" stroke="rgba(240,250,255,0.09)" stroke-width="1"/><line x1="1526.69" y1="588.4" x2="1526.69" y2="709" stroke="rgba(240,250,255,0.09)" stroke-width="1"/><line x1="1598.45" y1="588.4" x2="1598.45" y2="709" stroke="rgba(240,250,255,0.09)" stroke-width="1"/><line x1="1670.21" y1="588.4" x2="1670.21" y2="709" stroke="rgba(240,250,255,0.09)" stroke-width="1"/><line x1="1741.97" y1="588.4" x2="1741.97" y2="709" stroke="rgba(240,250,255,0.09)" stroke-width="1"/><line x1="1813.74" y1="588.4" x2="1813.74" y2="709" stroke="rgba(240,250,255,0.09)" stroke-width="1"/><path d="M1311.41,647.14 L1322.93,647.14 L1327.1,616.74 L1334.62,676.03 L1350.99,676.03 L1355,646.81 L1358.84,676.03 L1383.05,676.03 L1386.9,646.81 L1391.07,676.03 L1395.25,676.03 L1399.42,647.14 L1411.45,647.14 L1415.12,676.03 L1418.96,647.14 L1427.81,647.14 L1430.99,676.03 L1435.33,647.14 L1447.35,647.14 L1451.03,676.03 L1454.87,676.03 L1458.71,647.14 L1498.29,647.14 L1502.14,676.03 L1506.31,647.14 L1860.9,647.14 L1865.08,676.03 L1868.92,647.14 L1880.95,647.14 L1880.95,705 L1311.41,705 Z" fill="url(#g7)"/><path d="M1311.41,647.14 L1322.93,647.14 L1327.1,616.74 L1334.62,676.03 L1350.99,676.03 L1355,646.81 L1358.84,676.03 L1383.05,676.03 L1386.9,646.81 L1391.07,676.03 L1395.25,676.03 L1399.42,647.14 L1411.45,647.14 L1415.12,676.03 L1418.96,647.14 L1427.81,647.14 L1430.99,676.03 L1435.33,647.14 L1447.35,647.14 L1451.03,676.03 L1454.87,676.03 L1458.71,647.14 L1498.29,647.14 L1502.14,676.03 L1506.31,647.14 L1860.9,647.14 L1865.08,676.03 L1868.92,647.14 L1880.95,647.14" fill="none" stroke="#f2495c" stroke-width="1.8" stroke-linejoin="round"/><text x="1305.4" y="621.9" font-size="13" fill="#ccccdc" text-anchor="end"  stroke="#ccccdc" stroke-width="0.25">22</text><text x="1305.4" y="680.7" font-size="13" fill="#ccccdc" text-anchor="end"  stroke="#ccccdc" stroke-width="0.25">20</text><text x="1311.4" y="723.6" font-size="13" fill="#ccccdc" text-anchor="middle"  stroke="#ccccdc" stroke-width="0.25">00:00</text><text x="1383.16" y="723.6" font-size="13" fill="#ccccdc" text-anchor="middle"  stroke="#ccccdc" stroke-width="0.25">03:00</text><text x="1454.93" y="723.6" font-size="13" fill="#ccccdc" text-anchor="middle"  stroke="#ccccdc" stroke-width="0.25">06:00</text><text x="1526.69" y="723.6" font-size="13" fill="#ccccdc" text-anchor="middle"  stroke="#ccccdc" stroke-width="0.25">09:00</text><text x="1598.45" y="723.6" font-size="13" fill="#ccccdc" text-anchor="middle"  stroke="#ccccdc" stroke-width="0.25">12:00</text><text x="1670.21" y="723.6" font-size="13" fill="#ccccdc" text-anchor="middle"  stroke="#ccccdc" stroke-width="0.25">15:00</text><text x="1741.97" y="723.6" font-size="13" fill="#ccccdc" text-anchor="middle"  stroke="#ccccdc" stroke-width="0.25">18:00</text><text x="1813.74" y="723.6" font-size="13" fill="#ccccdc" text-anchor="middle"  stroke="#ccccdc" stroke-width="0.25">21:00</text><rect x="1291" y="739" width="14" height="4" rx="2" fill="#f2495c"/><text x="1313" y="744.6" font-size="13" fill="#ccccdc" text-anchor="start"  stroke="#ccccdc" stroke-width="0.25">TDS</text><line x1="48.7" y1="825.2" x2="1862" y2="825.2" stroke="rgba(240,250,255,0.09)" stroke-width="1"/><line x1="48.7" y1="871.2" x2="1862" y2="871.2" stroke="rgba(240,250,255,0.09)" stroke-width="1"/><line x1="48.7" y1="916.9" x2="1862" y2="916.9" stroke="rgba(240,250,255,0.09)" stroke-width="1"/><line x1="48.7" y1="963.5" x2="1862" y2="963.5" stroke="rgba(240,250,255,0.09)" stroke-width="1"/><line x1="48.7" y1="1008.9" x2="1862" y2="1008.9" stroke="rgba(240,250,255,0.09)" stroke-width="1"/><line x1="48.7" y1="784.4" x2="48.7" y2="1013" stroke="rgba(240,250,255,0.09)" stroke-width="1"/><line x1="124.22" y1="784.4" x2="124.22" y2="1013" stroke="rgba(240,250,255,0.09)" stroke-width="1"/><line x1="199.74" y1="784.4" x2="199.74" y2="1013" stroke="rgba(240,250,255,0.09)" stroke-width="1"/><line x1="275.26" y1="784.4" x2="275.26" y2="1013" stroke="rgba(240,250,255,0.09)" stroke-width="1"/><line x1="350.78" y1="784.4" x2="350.78" y2="1013" stroke="rgba(240,250,255,0.09)" stroke-width="1"/><line x1="426.3" y1="784.4" x2="426.3" y2="1013" stroke="rgba(240,250,255,0.09)" stroke-width="1"/><line x1="501.82" y1="784.4" x2="501.82" y2="1013" stroke="rgba(240,250,255,0.09)" stroke-width="1"/><line x1="577.35" y1="784.4" x2="577.35" y2="1013" stroke="rgba(240,250,255,0.09)" stroke-width="1"/><line x1="652.87" y1="784.4" x2="652.87" y2="1013" stroke="rgba(240,250,255,0.09)" stroke-width="1"/><line x1="728.39" y1="784.4" x2="728.39" y2="1013" stroke="rgba(240,250,255,0.09)" stroke-width="1"/><line x1="803.91" y1="784.4" x2="803.91" y2="1013" stroke="rgba(240,250,255,0.09)" stroke-width="1"/><line x1="879.43" y1="784.4" x2="879.43" y2="1013" stroke="rgba(240,250,255,0.09)" stroke-width="1"/><line x1="954.95" y1="784.4" x2="954.95" y2="1013" stroke="rgba(240,250,255,0.09)" stroke-width="1"/><line x1="1030.47" y1="784.4" x2="1030.47" y2="1013" stroke="rgba(240,250,255,0.09)" stroke-width="1"/><line x1="1105.99" y1="784.4" x2="1105.99" y2="1013" stroke="rgba(240,250,255,0.09)" stroke-width="1"/><line x1="1181.51" y1="784.4" x2="1181.51" y2="1013" stroke="rgba(240,250,255,0.09)" stroke-width="1"/><line x1="1257.03" y1="784.4" x2="1257.03" y2="1013" stroke="rgba(240,250,255,0.09)" stroke-width="1"/><line x1="1332.55" y1="784.4" x2="1332.55" y2="1013" stroke="rgba(240,250,255,0.09)" stroke-width="1"/><line x1="1408.08" y1="784.4" x2="1408.08" y2="1013" stroke="rgba(240,250,255,0.09)" stroke-width="1"/><line x1="1483.6" y1="784.4" x2="1483.6" y2="1013" stroke="rgba(240,250,255,0.09)" stroke-width="1"/><line x1="1559.12" y1="784.4" x2="1559.12" y2="1013" stroke="rgba(240,250,255,0.09)" stroke-width="1"/><line x1="1634.64" y1="784.4" x2="1634.64" y2="1013" stroke="rgba(240,250,255,0.09)" stroke-width="1"/><line x1="1710.16" y1="784.4" x2="1710.16" y2="1013" stroke="rgba(240,250,255,0.09)" stroke-width="1"/><line x1="1785.68" y1="784.4" x2="1785.68" y2="1013" stroke="rgba(240,250,255,0.09)" stroke-width="1"/><path d="M48.72,978.39 L339.98,979.04 L1004.83,978.39 L1017.26,979.04 L1029.9,977.95 L1282.41,977.95 L1295.92,976.86 L1320.56,977.95 L1332.55,977.95 L1344.97,976.86 L1370.05,976.86 L1383.13,977.95 L1690,977.21 L1847.98,977.21 L1847.98,1009 L48.72,1009 Z" fill="url(#g8)"/><path d="M48.72,978.39 L339.98,979.04 L1004.83,978.39 L1017.26,979.04 L1029.9,977.95 L1282.41,977.95 L1295.92,976.86 L1320.56,977.95 L1332.55,977.95 L1344.97,976.86 L1370.05,976.86 L1383.13,977.95 L1690,977.21 L1847.98,977.21" fill="none" stroke="#73bf69" stroke-width="1.8" stroke-linejoin="round"/><path d="M48.72,874.83 L85.78,874.83 L97.77,875.92 L212.23,875.92 L224.22,877.01 L440.09,877.01 L450.99,878.1 L577.44,878.1 L589.43,879.19 L727.91,879.19 L739.9,877.67 L752.55,879.19 L765.63,878.1 L892.07,878.1 L904.5,877.01 L942.7,877.01 L955.35,875.92 L1004.83,875.92 L1017.26,874.83 L1054.97,874.83 L1067.4,873.74 L1106.21,873.74 L1118.2,872.65 L1168.99,872.65 L1181.42,872 L1219.18,872 L1231.18,870.47 L1243.6,871.13 L1257.12,872 L1269.33,870.91 L1282.41,872 L1295.92,871.13 L1383.13,871.13 L1396.21,872 L1496.98,872 L1507.88,873.09 L1633.88,873.09 L1646.97,874.18 L1810.43,874.3 L1823.5,875.13 L1847.98,875.13 L1847.98,1009 L48.72,1009 Z" fill="url(#g9)"/><path d="M48.72,874.83 L85.78,874.83 L97.77,875.92 L212.23,875.92 L224.22,877.01 L440.09,877.01 L450.99,878.1 L577.44,878.1 L589.43,879.19 L727.91,879.19 L739.9,877.67 L752.55,879.19 L765.63,878.1 L892.07,878.1 L904.5,877.01 L942.7,877.01 L955.35,875.92 L1004.83,875.92 L1017.26,874.83 L1054.97,874.83 L1067.4,873.74 L1106.21,873.74 L1118.2,872.65 L1168.99,872.65 L1181.42,872 L1219.18,872 L1231.18,870.47 L1243.6,871.13 L1257.12,872 L1269.33,870.91 L1282.41,872 L1295.92,871.13 L1383.13,871.13 L1396.21,872 L1496.98,872 L1507.88,873.09 L1633.88,873.09 L1646.97,874.18 L1810.43,874.3 L1823.5,875.13 L1847.98,875.13" fill="none" stroke="#fade2a" stroke-width="1.8" stroke-linejoin="round"/><path d="M48.72,812.05 L61.15,812.05 L73.79,815.97 L85.78,815.97 L97.77,806.81 L110.85,815.97 L123.93,820.99 L173.64,820.99 L186.06,815.54 L199.15,820.99 L275.01,820.99 L287,811.61 L299.43,820.99 L312.51,820.99 L324.5,815.97 L363.79,815.97 L375.13,820.99 L388.43,815.97 L413.93,815.97 L425.92,820.99 L439,815.97 L476.06,815.97 L489.15,822.08 L501.14,820.99 L514.22,815.97 L639.62,815.97 L652.27,820.99 L665.13,815.97 L1200,815.97 L1219.18,815.97 L1231.18,811.61 L1243.6,815.97 L1282.41,815.97 L1295.92,811.61 L1307.91,811.61 L1320.56,815.97 L1332.55,811.61 L1396.21,811.61 L1408.2,815.97 L1447,815.97 L1458.34,811.61 L1470.98,815.97 L1497.58,815.97 L1507.88,811.61 L1520.52,815.97 L1784.31,815.97 L1785.12,815.89 L1797.91,820.9 L1810.43,815.89 L1823.5,815.89 L1836.02,811.72 L1847.98,811.72 L1847.98,1009 L48.72,1009 Z" fill="url(#g10)"/><path d="M48.72,812.05 L61.15,812.05 L73.79,815.97 L85.78,815.97 L97.77,806.81 L110.85,815.97 L123.93,820.99 L173.64,820.99 L186.06,815.54 L199.15,820.99 L275.01,820.99 L287,811.61 L299.43,820.99 L312.51,820.99 L324.5,815.97 L363.79,815.97 L375.13,820.99 L388.43,815.97 L413.93,815.97 L425.92,820.99 L439,815.97 L476.06,815.97 L489.15,822.08 L501.14,820.99 L514.22,815.97 L639.62,815.97 L652.27,820.99 L665.13,815.97 L1200,815.97 L1219.18,815.97 L1231.18,811.61 L1243.6,815.97 L1282.41,815.97 L1295.92,811.61 L1307.91,811.61 L1320.56,815.97 L1332.55,811.61 L1396.21,811.61 L1408.2,815.97 L1447,815.97 L1458.34,811.61 L1470.98,815.97 L1497.58,815.97 L1507.88,811.61 L1520.52,815.97 L1784.31,815.97 L1785.12,815.89 L1797.91,820.9 L1810.43,815.89 L1823.5,815.89 L1836.02,811.72 L1847.98,811.72" fill="none" stroke="#8ab8ff" stroke-width="1.8" stroke-linejoin="round"/><path d="M48.72,912.98 L85.78,912.98 L97.77,907.53 L110.85,912.98 L123.93,916.91 L173.64,916.91 L186.06,912.33 L199.15,916.91 L275.01,916.91 L287,912.33 L299.43,916.91 L312.51,916.91 L324.5,912.98 L363.79,912.98 L375.13,916.91 L388.43,912.98 L413.93,912.98 L425.92,916.91 L439,912.98 L476.06,912.98 L489.15,916.91 L501.14,916.91 L514.22,912.98 L639.62,912.98 L652.27,916.91 L665.13,912.98 L1784.31,912.98 L1785.12,912.96 L1797.91,916.85 L1810.43,912.96 L1847.98,912.96 L1847.98,1009 L48.72,1009 Z" fill="url(#g11)"/><path d="M48.72,912.98 L85.78,912.98 L97.77,907.53 L110.85,912.98 L123.93,916.91 L173.64,916.91 L186.06,912.33 L199.15,916.91 L275.01,916.91 L287,912.33 L299.43,916.91 L312.51,916.91 L324.5,912.98 L363.79,912.98 L375.13,916.91 L388.43,912.98 L413.93,912.98 L425.92,916.91 L439,912.98 L476.06,912.98 L489.15,916.91 L501.14,916.91 L514.22,912.98 L639.62,912.98 L652.27,916.91 L665.13,912.98 L1784.31,912.98 L1785.12,912.96 L1797.91,916.85 L1810.43,912.96 L1847.98,912.96" fill="none" stroke="#f2495c" stroke-width="1.8" stroke-linejoin="round"/><path d="M48.7,1009 L1848,1009 L1848,1009 L48.7,1009 Z" fill="url(#g12)"/><path d="M48.7,1009 L1848,1009" fill="none" stroke="#ca95e5" stroke-width="1.8" stroke-linejoin="round"/><path d="M48.72,1004.98 L339.98,1004.98 L602.07,1004.98 L626.54,1006.73 L629.98,1006.73 L639.62,1006.07 L929.18,1004.55 L1093.13,1004.55 L1106.21,1003.89 L1433.27,1003.89 L1446.35,1004.98 L1847.98,1005.02 L1847.98,1009 L48.72,1009 Z" fill="url(#g13)"/><path d="M48.72,1004.98 L339.98,1004.98 L602.07,1004.98 L626.54,1006.73 L629.98,1006.73 L639.62,1006.07 L929.18,1004.55 L1093.13,1004.55 L1106.21,1003.89 L1433.27,1003.89 L1446.35,1004.98 L1847.98,1005.02" fill="none" stroke="#8a6fc0" stroke-width="1.8" stroke-linejoin="round"/><path d="M48.72,976.86 L110.85,976.86 L123.93,975.55 L135.92,978.82 L149,978.82 L339.98,979.04 L350.27,979.04 L375.78,980.57 L400.85,980.57 L425.92,979.04 L439,982.09 L450.99,979.48 L476.06,983.18 L514.22,979.48 L577.44,979.48 L589.43,980.57 L602.07,979.04 L614.5,983.84 L626.98,989.94 L627.58,989.72 L639.62,988.2 L665.13,988.2 L677.77,986.02 L690.85,984.93 L702.84,984.93 L714.83,986.02 L727.91,984.93 L739.9,984.93 L752.55,983.84 L765.63,984.93 L779.15,983.84 L791.14,984.93 L816.21,984.93 L829.29,983.84 L841.93,982.75 L855.01,983.18 L866.35,982.09 L892.07,982.09 L904.5,981 L929.18,979.48 L942.7,977.95 L992.84,977.3 L1017.26,976.21 L1029.9,974.68 L1042.55,974.68 L1054.97,973.59 L1093.13,973.59 L1106.21,972.94 L1118.2,971.85 L1131.28,972.94 L1143.27,972.94 L1156.35,971.85 L1219.18,971.85 L1231.18,970.76 L1243.6,970.76 L1257.12,971.85 L1269.33,971.19 L1282.41,971.85 L1295.92,971.19 L1332.55,971.19 L1344.97,969.23 L1356.97,970.1 L1396.21,970.1 L1408.2,971.85 L1421.93,971.85 L1433.27,972.94 L1446.35,973.59 L1483.41,973.59 L1507.88,975.55 L1559.33,975.55 L1571.1,974.68 L1584.18,975.55 L1608.81,973.59 L1633.88,973.59 L1659.61,975.55 L1672.04,974.68 L1684.68,975.55 L1697.11,974.68 L1710.62,974.68 L1723.27,973.59 L1736.35,974.68 L1760.33,974.68 L1773.44,975.26 L1847.98,975.82 L1847.98,1009 L48.72,1009 Z" fill="url(#g14)"/><path d="M48.72,976.86 L110.85,976.86 L123.93,975.55 L135.92,978.82 L149,978.82 L339.98,979.04 L350.27,979.04 L375.78,980.57 L400.85,980.57 L425.92,979.04 L439,982.09 L450.99,979.48 L476.06,983.18 L514.22,979.48 L577.44,979.48 L589.43,980.57 L602.07,979.04 L614.5,983.84 L626.98,989.94 L627.58,989.72 L639.62,988.2 L665.13,988.2 L677.77,986.02 L690.85,984.93 L702.84,984.93 L714.83,986.02 L727.91,984.93 L739.9,984.93 L752.55,983.84 L765.63,984.93 L779.15,983.84 L791.14,984.93 L816.21,984.93 L829.29,983.84 L841.93,982.75 L855.01,983.18 L866.35,982.09 L892.07,982.09 L904.5,981 L929.18,979.48 L942.7,977.95 L992.84,977.3 L1017.26,976.21 L1029.9,974.68 L1042.55,974.68 L1054.97,973.59 L1093.13,973.59 L1106.21,972.94 L1118.2,971.85 L1131.28,972.94 L1143.27,972.94 L1156.35,971.85 L1219.18,971.85 L1231.18,970.76 L1243.6,970.76 L1257.12,971.85 L1269.33,971.19 L1282.41,971.85 L1295.92,971.19 L1332.55,971.19 L1344.97,969.23 L1356.97,970.1 L1396.21,970.1 L1408.2,971.85 L1421.93,971.85 L1433.27,972.94 L1446.35,973.59 L1483.41,973.59 L1507.88,975.55 L1559.33,975.55 L1571.1,974.68 L1584.18,975.55 L1608.81,973.59 L1633.88,973.59 L1659.61,975.55 L1672.04,974.68 L1684.68,975.55 L1697.11,974.68 L1710.62,974.68 L1723.27,973.59 L1736.35,974.68 L1760.33,974.68 L1773.44,975.26 L1847.98,975.82" fill="none" stroke="#37872d" stroke-width="1.8" stroke-linejoin="round"/><path d="M48.72,892.93 L61.15,885.08 L73.79,868.95 L110.85,868.95 L123.93,861.75 L135.92,861.75 L149,845.4 L160.99,861.75 L173.64,868.95 L186.06,861.75 L249.29,861.75 L261.93,845.4 L275.01,861.75 L287,845.4 L299.43,845.4 L312.51,861.75 L338.07,861.75 L350.27,845.4 L363.79,845.4 L375.13,837.77 L388.43,845.4 L400.85,837.77 L413.93,837.77 L425.92,845.4 L440.09,822.95 L450.99,831.23 L476.06,814.88 L489.15,824.69 L514.22,822.95 L526.21,831.23 L539.29,814.88 L551.93,806.81 L563.92,837.77 L577,814.23 L589.43,822.95 L602.07,814.23 L614.5,822.95 L626.98,806.81 L627.58,806.81 L652.27,806.81 L665.13,822.95 L677.77,806.81 L714.83,806.81 L727.91,822.95 L739.9,822.95 L752.55,806.81 L765.63,831.23 L779.15,814.88 L791.14,806.81 L805.31,806.81 L816.21,822.95 L829.72,806.81 L841.93,822.95 L855.01,831.23 L866.35,831.23 L879.43,822.95 L892.07,822.95 L904.5,837.77 L916.98,853.69 L917.58,854.12 L929.18,861.75 L992.41,861.75 L1004.83,868.95 L1017.26,861.75 L1029.9,892.93 L1042.55,876.58 L1054.97,899.9 L1067.4,899.9 L1080.05,892.93 L1106.21,907.97 L1118.2,923.88 L1131.28,930.86 L1143.27,923.88 L1156.35,923.88 L1168.99,930.86 L1181.42,930.86 L1194.5,954.84 L1206.49,962.04 L1219.18,946.78 L1231.18,969.23 L1243.6,969.23 L1257.12,961.38 L1269.33,986.02 L1282.41,977.95 L1295.92,969.67 L1307.26,986.02 L1320.56,986.02 L1332.55,946.78 L1356.97,946.78 L1371.14,962.04 L1383.13,969.23 L1396.21,946.12 L1408.2,930.43 L1421.93,923.88 L1433.27,899.9 L1447,885.08 L1497.58,885.08 L1507.88,868.73 L1520.52,885.08 L1533.6,885.08 L1546.68,876.58 L1559.33,861.75 L1571.1,861.75 L1584.18,885.08 L1596.82,868.73 L1608.81,915.6 L1621.89,923.88 L1633.88,907.97 L1646.97,899.9 L1659.61,868.73 L1672.04,885.08 L1684.68,868.73 L1696.95,884.59 L1697.11,885.08 L1722.82,884.59 L1723.27,885.08 L1734.82,861.75 L1735.06,861.23 L1747.57,876.52 L1747.9,877.01 L1759.53,876.52 L1760.33,877.01 L1772.97,868.73 L1773.44,867.35 L1784.31,861.75 L1785.12,861.23 L1797.91,861.23 L1810.43,868.74 L1823.5,861.23 L1847.98,861.23 L1847.98,1009 L48.72,1009 Z" fill="url(#g15)"/><path d="M48.72,892.93 L61.15,885.08 L73.79,868.95 L110.85,868.95 L123.93,861.75 L135.92,861.75 L149,845.4 L160.99,861.75 L173.64,868.95 L186.06,861.75 L249.29,861.75 L261.93,845.4 L275.01,861.75 L287,845.4 L299.43,845.4 L312.51,861.75 L338.07,861.75 L350.27,845.4 L363.79,845.4 L375.13,837.77 L388.43,845.4 L400.85,837.77 L413.93,837.77 L425.92,845.4 L440.09,822.95 L450.99,831.23 L476.06,814.88 L489.15,824.69 L514.22,822.95 L526.21,831.23 L539.29,814.88 L551.93,806.81 L563.92,837.77 L577,814.23 L589.43,822.95 L602.07,814.23 L614.5,822.95 L626.98,806.81 L627.58,806.81 L652.27,806.81 L665.13,822.95 L677.77,806.81 L714.83,806.81 L727.91,822.95 L739.9,822.95 L752.55,806.81 L765.63,831.23 L779.15,814.88 L791.14,806.81 L805.31,806.81 L816.21,822.95 L829.72,806.81 L841.93,822.95 L855.01,831.23 L866.35,831.23 L879.43,822.95 L892.07,822.95 L904.5,837.77 L916.98,853.69 L917.58,854.12 L929.18,861.75 L992.41,861.75 L1004.83,868.95 L1017.26,861.75 L1029.9,892.93 L1042.55,876.58 L1054.97,899.9 L1067.4,899.9 L1080.05,892.93 L1106.21,907.97 L1118.2,923.88 L1131.28,930.86 L1143.27,923.88 L1156.35,923.88 L1168.99,930.86 L1181.42,930.86 L1194.5,954.84 L1206.49,962.04 L1219.18,946.78 L1231.18,969.23 L1243.6,969.23 L1257.12,961.38 L1269.33,986.02 L1282.41,977.95 L1295.92,969.67 L1307.26,986.02 L1320.56,986.02 L1332.55,946.78 L1356.97,946.78 L1371.14,962.04 L1383.13,969.23 L1396.21,946.12 L1408.2,930.43 L1421.93,923.88 L1433.27,899.9 L1447,885.08 L1497.58,885.08 L1507.88,868.73 L1520.52,885.08 L1533.6,885.08 L1546.68,876.58 L1559.33,861.75 L1571.1,861.75 L1584.18,885.08 L1596.82,868.73 L1608.81,915.6 L1621.89,923.88 L1633.88,907.97 L1646.97,899.9 L1659.61,868.73 L1672.04,885.08 L1684.68,868.73 L1696.95,884.59 L1697.11,885.08 L1722.82,884.59 L1723.27,885.08 L1734.82,861.75 L1735.06,861.23 L1747.57,876.52 L1747.9,877.01 L1759.53,876.52 L1760.33,877.01 L1772.97,868.73 L1773.44,867.35 L1784.31,861.75 L1785.12,861.23 L1797.91,861.23 L1810.43,868.74 L1823.5,861.23 L1847.98,861.23" fill="none" stroke="#5794f2" stroke-width="1.8" stroke-linejoin="round"/><text x="42.7" y="829.5" font-size="13" fill="#ccccdc" text-anchor="end"  stroke="#ccccdc" stroke-width="0.25">40</text><text x="42.7" y="875.5" font-size="13" fill="#ccccdc" text-anchor="end"  stroke="#ccccdc" stroke-width="0.25">30</text><text x="42.7" y="921.2" font-size="13" fill="#ccccdc" text-anchor="end"  stroke="#ccccdc" stroke-width="0.25">20</text><text x="42.7" y="967.8" font-size="13" fill="#ccccdc" text-anchor="end"  stroke="#ccccdc" stroke-width="0.25">10</text><text x="42.7" y="1013.2" font-size="13" fill="#ccccdc" text-anchor="end"  stroke="#ccccdc" stroke-width="0.25">0</text><text x="48.7" y="1027.5" font-size="13" fill="#ccccdc" text-anchor="middle"  stroke="#ccccdc" stroke-width="0.25">00:00</text><text x="124.22" y="1027.5" font-size="13" fill="#ccccdc" text-anchor="middle"  stroke="#ccccdc" stroke-width="0.25">01:00</text><text x="199.74" y="1027.5" font-size="13" fill="#ccccdc" text-anchor="middle"  stroke="#ccccdc" stroke-width="0.25">02:00</text><text x="275.26" y="1027.5" font-size="13" fill="#ccccdc" text-anchor="middle"  stroke="#ccccdc" stroke-width="0.25">03:00</text><text x="350.78" y="1027.5" font-size="13" fill="#ccccdc" text-anchor="middle"  stroke="#ccccdc" stroke-width="0.25">04:00</text><text x="426.3" y="1027.5" font-size="13" fill="#ccccdc" text-anchor="middle"  stroke="#ccccdc" stroke-width="0.25">05:00</text><text x="501.82" y="1027.5" font-size="13" fill="#ccccdc" text-anchor="middle"  stroke="#ccccdc" stroke-width="0.25">06:00</text><text x="577.35" y="1027.5" font-size="13" fill="#ccccdc" text-anchor="middle"  stroke="#ccccdc" stroke-width="0.25">07:00</text><text x="652.87" y="1027.5" font-size="13" fill="#ccccdc" text-anchor="middle"  stroke="#ccccdc" stroke-width="0.25">08:00</text><text x="728.39" y="1027.5" font-size="13" fill="#ccccdc" text-anchor="middle"  stroke="#ccccdc" stroke-width="0.25">09:00</text><text x="803.91" y="1027.5" font-size="13" fill="#ccccdc" text-anchor="middle"  stroke="#ccccdc" stroke-width="0.25">10:00</text><text x="879.43" y="1027.5" font-size="13" fill="#ccccdc" text-anchor="middle"  stroke="#ccccdc" stroke-width="0.25">11:00</text><text x="954.95" y="1027.5" font-size="13" fill="#ccccdc" text-anchor="middle"  stroke="#ccccdc" stroke-width="0.25">12:00</text><text x="1030.47" y="1027.5" font-size="13" fill="#ccccdc" text-anchor="middle"  stroke="#ccccdc" stroke-width="0.25">13:00</text><text x="1105.99" y="1027.5" font-size="13" fill="#ccccdc" text-anchor="middle"  stroke="#ccccdc" stroke-width="0.25">14:00</text><text x="1181.51" y="1027.5" font-size="13" fill="#ccccdc" text-anchor="middle"  stroke="#ccccdc" stroke-width="0.25">15:00</text><text x="1257.03" y="1027.5" font-size="13" fill="#ccccdc" text-anchor="middle"  stroke="#ccccdc" stroke-width="0.25">16:00</text><text x="1332.55" y="1027.5" font-size="13" fill="#ccccdc" text-anchor="middle"  stroke="#ccccdc" stroke-width="0.25">17:00</text><text x="1408.08" y="1027.5" font-size="13" fill="#ccccdc" text-anchor="middle"  stroke="#ccccdc" stroke-width="0.25">18:00</text><text x="1483.6" y="1027.5" font-size="13" fill="#ccccdc" text-anchor="middle"  stroke="#ccccdc" stroke-width="0.25">19:00</text><text x="1559.12" y="1027.5" font-size="13" fill="#ccccdc" text-anchor="middle"  stroke="#ccccdc" stroke-width="0.25">20:00</text><text x="1634.64" y="1027.5" font-size="13" fill="#ccccdc" text-anchor="middle"  stroke="#ccccdc" stroke-width="0.25">21:00</text><text x="1710.16" y="1027.5" font-size="13" fill="#ccccdc" text-anchor="middle"  stroke="#ccccdc" stroke-width="0.25">22:00</text><text x="1785.68" y="1027.5" font-size="13" fill="#ccccdc" text-anchor="middle"  stroke="#ccccdc" stroke-width="0.25">23:00</text><text x="1866" y="788.2" font-size="13" fill="#ccccdc" text-anchor="start"  stroke="#ccccdc" stroke-width="0.25">575</text><text x="1866" y="827.1" font-size="13" fill="#ccccdc" text-anchor="start"  stroke="#ccccdc" stroke-width="0.25">570</text><text x="1866" y="866.1" font-size="13" fill="#ccccdc" text-anchor="start"  stroke="#ccccdc" stroke-width="0.25">565</text><text x="1866" y="904.2" font-size="13" fill="#ccccdc" text-anchor="start"  stroke="#ccccdc" stroke-width="0.25">560</text><text x="1866" y="943.1" font-size="13" fill="#ccccdc" text-anchor="start"  stroke="#ccccdc" stroke-width="0.25">555</text><text x="1866" y="982.1" font-size="13" fill="#ccccdc" text-anchor="start"  stroke="#ccccdc" stroke-width="0.25">550</text><rect x="27" y="1043" width="14" height="4" rx="2" fill="#73bf69"/><text x="49" y="1048.6" font-size="13" fill="#ccccdc" text-anchor="start"  stroke="#ccccdc" stroke-width="0.25">pH</text><rect x="75.6" y="1043" width="14" height="4" rx="2" fill="#fade2a"/><text x="97.6" y="1048.6" font-size="13" fill="#ccccdc" text-anchor="start"  stroke="#ccccdc" stroke-width="0.25">Temperature (ºC)</text><rect x="207" y="1043" width="14" height="4" rx="2" fill="#8ab8ff"/><text x="229" y="1048.6" font-size="13" fill="#ccccdc" text-anchor="start"  stroke="#ccccdc" stroke-width="0.25">EC</text><rect x="255.6" y="1043" width="14" height="4" rx="2" fill="#ff9830"/><text x="277.6" y="1048.6" font-size="13" fill="#ccccdc" text-anchor="start"  stroke="#ccccdc" stroke-width="0.25">Salinity Level (ppt)</text><rect x="394.6" y="1043" width="14" height="4" rx="2" fill="#f2495c"/><text x="416.6" y="1048.6" font-size="13" fill="#ccccdc" text-anchor="start"  stroke="#ccccdc" stroke-width="0.25">TDS</text><rect x="451.2" y="1043" width="14" height="4" rx="2" fill="#ca95e5"/><text x="473.2" y="1048.6" font-size="13" fill="#ccccdc" text-anchor="start"  stroke="#ccccdc" stroke-width="0.25">Ammonia level (mg/L)</text><rect x="609.6" y="1043" width="14" height="4" rx="2" fill="#8a6fc0"/><text x="631.6" y="1048.6" font-size="13" fill="#ccccdc" text-anchor="start"  stroke="#ccccdc" stroke-width="0.25">Oxygen Saturation Level (%)</text><rect x="807.8" y="1043" width="14" height="4" rx="2" fill="#37872d"/><text x="829.8" y="1048.6" font-size="13" fill="#ccccdc" text-anchor="start"  stroke="#ccccdc" stroke-width="0.25">DO</text><rect x="1836" y="1043" width="14" height="4" rx="2" fill="#5794f2"/><text x="1858" y="1048.6" font-size="13" fill="#ccccdc" text-anchor="start"  stroke="#ccccdc" stroke-width="0.25">ORP</text><path d="M283.22,420.2 A45.3,45.3 0 1 1 369.38,420.2 L353.88,415.16 A29.0,29.0 0 1 0 298.72,415.16 Z" fill="#22252b"/><path d="M283.22,420.2 A45.3,45.3 0 0 1 357.77,373.61 L346.45,385.34 A29.0,29.0 0 0 0 298.72,415.16 Z" fill="#5794f2"/><path d="M280.36,421.13 A48.3,48.3 0 0 1 291.56,372.65" fill="none" stroke="#73bf69" stroke-width="2.8"/><path d="M291.56,372.65 A48.3,48.3 0 0 1 343.61,361.11" fill="none" stroke="#fade2a" stroke-width="2.8"/><path d="M343.61,361.11 A48.3,48.3 0 0 1 370.76,387.33" fill="none" stroke="#5794f2" stroke-width="2.8"/><path d="M370.76,387.33 A48.3,48.3 0 0 1 372.24,421.13" fill="none" stroke="#e02f44" stroke-width="2.8"/><text x="326.3" y="424.4" font-size="30.5" fill="#5794f2" text-anchor="middle" textLength="51" lengthAdjust="spacingAndGlyphs">565</text><path d="M1547.42,420.2 A45.3,45.3 0 1 1 1633.58,420.2 L1618.08,415.16 A29.0,29.0 0 1 0 1562.92,415.16 Z" fill="#22252b"/><path d="M1547.42,420.2 A45.3,45.3 0 0 1 1590.5,360.9 L1590.5,377.2 A29.0,29.0 0 0 0 1562.92,415.16 Z" fill="#fade2a"/><path d="M1544.56,421.13 A48.3,48.3 0 0 1 1571.4,361.84" fill="none" stroke="#73bf69" stroke-width="2.8"/><path d="M1571.4,361.84 A48.3,48.3 0 0 1 1606.78,360.73" fill="none" stroke="#fade2a" stroke-width="2.8"/><path d="M1606.78,360.73 A48.3,48.3 0 0 1 1633.87,384.95" fill="none" stroke="#5794f2" stroke-width="2.8"/><path d="M1633.87,384.95 A48.3,48.3 0 0 1 1636.44,421.13" fill="none" stroke="#e02f44" stroke-width="2.8"/><text x="1589" y="424.6" font-size="30" fill="#fade2a" font-weight="bold" text-anchor="middle" textLength="30" lengthAdjust="spacingAndGlyphs">21</text><rect x="655" y="352" width="10" height="93.6" rx="2" fill="url(#rgb)"/><rect x="667" y="352" width="10" height="93.6" rx="2" fill="url(#rgb)"/><rect x="679" y="352" width="10" height="93.6" rx="2" fill="url(#rgb)"/><rect x="691" y="352" width="10" height="93.6" rx="2" fill="url(#rgb)"/><rect x="703" y="352" width="10" height="93.6" rx="2" fill="url(#rgb)"/><rect x="715" y="352" width="10" height="93.6" rx="2" fill="url(#rgb)"/><rect x="727" y="352" width="10" height="93.6" rx="2" fill="url(#rgb)"/><rect x="739" y="352" width="10" height="93.6" rx="2" fill="url(#rgb)"/><rect x="751" y="352" width="10" height="93.6" rx="2" fill="url(#rgb)"/><rect x="763" y="352" width="10" height="93.6" rx="2" fill="url(#rgb)"/><rect x="775" y="352" width="10" height="93.6" rx="2" fill="url(#rgb)"/><rect x="787" y="352" width="10" height="93.6" rx="2" fill="url(#rgb)"/><rect x="799" y="352" width="10" height="93.6" rx="2" fill="url(#rgb)"/><rect x="811" y="352" width="10" height="93.6" rx="2" fill="url(#rgb)"/><rect x="823" y="352" width="10" height="93.6" rx="2" fill="url(#rgb)"/><rect x="835" y="352" width="10" height="93.6" rx="2" fill="url(#rgb)"/><rect x="847" y="352" width="10" height="93.6" rx="2" fill="url(#rgg)"/><rect x="859" y="352" width="10" height="93.6" rx="2" fill="url(#rgg)"/><rect x="871" y="352" width="10" height="93.6" rx="2" fill="url(#rgg)"/><rect x="883" y="352" width="10" height="93.6" rx="2" fill="url(#rgg)"/><rect x="895" y="352" width="10" height="93.6" rx="2" fill="url(#rgg)"/><rect x="907" y="352" width="10" height="93.6" rx="2" fill="url(#rgg)"/><rect x="919" y="352" width="10" height="93.6" rx="2" fill="url(#rgg)"/><rect x="931" y="352" width="10" height="93.6" rx="2" fill="url(#rgg)"/><rect x="943" y="352" width="10" height="93.6" rx="2" fill="url(#rgg)"/><rect x="955" y="352" width="10" height="93.6" rx="2" fill="url(#rgy)"/><rect x="967" y="352" width="10" height="93.6" rx="2" fill="url(#rgy)"/><rect x="979" y="352" width="10" height="93.6" rx="2" fill="url(#rgy)"/><rect x="991" y="352" width="10" height="93.6" rx="2" fill="url(#rgy)"/><rect x="1003" y="352" width="10" height="93.6" rx="2" fill="url(#rgy)"/><rect x="1015" y="352" width="10" height="93.6" rx="2" fill="url(#rgy)"/><rect x="1027" y="352" width="10" height="93.6" rx="2" fill="#eab839" fill-opacity="0.18"/><rect x="1039" y="352" width="10" height="93.6" rx="2" fill="#e02f44" fill-opacity="0.18"/><rect x="1051" y="352" width="10" height="93.6" rx="2" fill="#e02f44" fill-opacity="0.18"/><rect x="1063" y="352" width="10" height="93.6" rx="2" fill="#e02f44" fill-opacity="0.18"/><rect x="1075" y="352" width="10" height="93.6" rx="2" fill="#e02f44" fill-opacity="0.18"/><rect x="1087" y="352" width="10" height="93.6" rx="2" fill="#e02f44" fill-opacity="0.18"/><rect x="1099" y="352" width="10" height="93.6" rx="2" fill="#e02f44" fill-opacity="0.18"/><rect x="1111" y="352" width="10" height="93.6" rx="2" fill="#e02f44" fill-opacity="0.18"/><rect x="1123" y="352" width="10" height="93.6" rx="2" fill="#e02f44" fill-opacity="0.18"/><text x="1153" y="415" font-size="48.5" fill="#eab839" text-anchor="start" textLength="91.4" lengthAdjust="spacingAndGlyphs">43.0</text><text x="23" y="485" font-size="14.6" fill="#ccccdc" text-anchor="start" stroke="#ccccdc" stroke-width="0.45">Max:</text><text x="128.5" y="518.4" font-size="16" fill="#e02f44" text-anchor="middle" >572.0</text><text x="260" y="485" font-size="14.6" fill="#ccccdc" text-anchor="start" stroke="#ccccdc" stroke-width="0.45">Avg:</text><text x="365.5" y="518.4" font-size="16" fill="#3274d9" text-anchor="middle" >563.8</text><text x="497" y="485" font-size="14.6" fill="#ccccdc" text-anchor="start" stroke="#ccccdc" stroke-width="0.45">Min:</text><text x="563" y="518.4" font-size="16" fill="#73bf69" text-anchor="middle" >549.0</text><text x="655" y="485" font-size="14.6" fill="#ccccdc" text-anchor="start" stroke="#ccccdc" stroke-width="0.45">Max:</text><text x="760.5" y="518.4" font-size="16" fill="#e02f44" text-anchor="middle" >44.0</text><text x="892" y="485" font-size="14.6" fill="#ccccdc" text-anchor="start" stroke="#ccccdc" stroke-width="0.45">Avg:</text><text x="997.5" y="518.4" font-size="16" fill="#eab839" text-anchor="middle" >42.0</text><text x="1129" y="485" font-size="14.6" fill="#ccccdc" text-anchor="start" stroke="#ccccdc" stroke-width="0.45">Min:</text><text x="1195" y="518.4" font-size="16" fill="#73bf69" text-anchor="middle" >40.0</text><text x="1287" y="485" font-size="14.6" fill="#ccccdc" text-anchor="start" stroke="#ccccdc" stroke-width="0.45">Max:</text><text x="1392.5" y="518.4" font-size="16" fill="#73bf69" text-anchor="middle" >22.0</text><text x="1524" y="485" font-size="14.6" fill="#ccccdc" text-anchor="start" stroke="#ccccdc" stroke-width="0.45">Avg:</text><text x="1629.5" y="518.4" font-size="16" fill="#73bf69" text-anchor="middle" >20.9</text><text x="1761" y="485" font-size="14.6" fill="#ccccdc" text-anchor="start" stroke="#ccccdc" stroke-width="0.45">Min:</text><text x="1827" y="518.4" font-size="16" fill="#73bf69" text-anchor="middle" >20.0</text></svg></body></html>
